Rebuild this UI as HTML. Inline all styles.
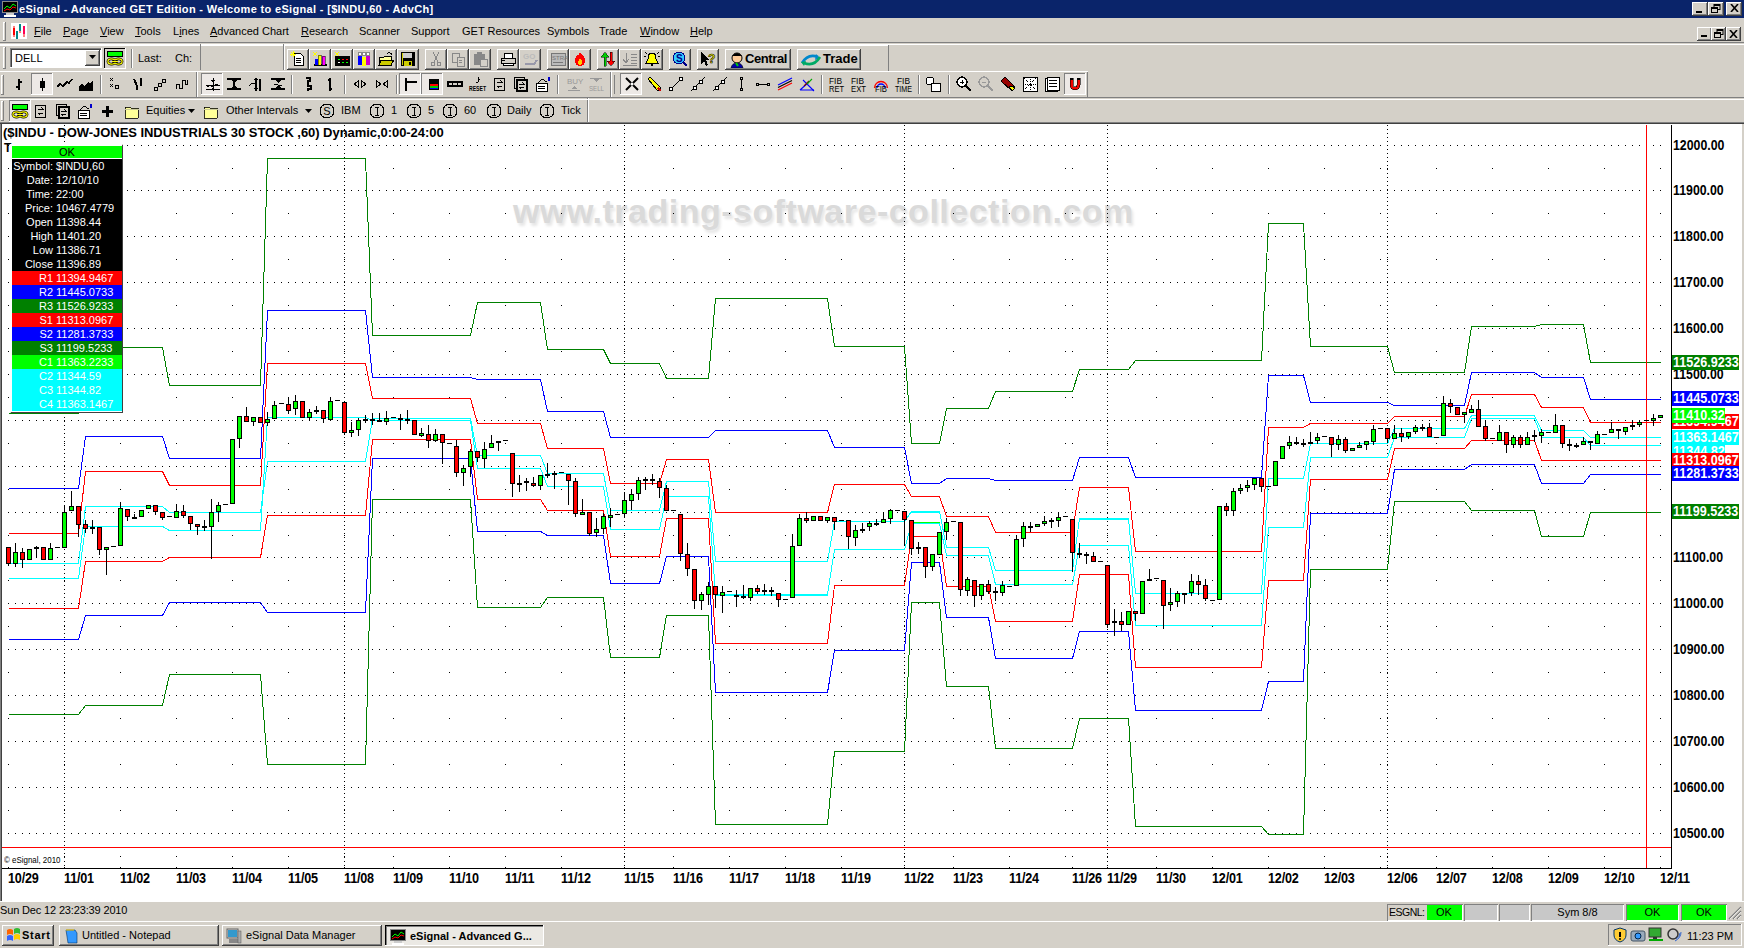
<!DOCTYPE html>
<html><head><meta charset="utf-8"><style>
html,body{margin:0;padding:0;width:1744px;height:948px;overflow:hidden;background:#d4d0c8}
body{position:relative;font-family:'Liberation Sans', sans-serif}
</style></head><body><div style="position:absolute;left:0px;top:0px;width:1744px;height:948px;background:#d4d0c8"></div><div style="position:absolute;left:0px;top:0px;width:1744px;height:18px;background:#0a246a"></div><svg style="position:absolute;left:2px;top:1px" width="16" height="16" viewBox="0 0 16 16"><rect x="0" y="0" width="16" height="12" fill="#888"/><rect x="1" y="1" width="14" height="10" fill="#000"/><path d="M2 8l3-3 3 2 3-4 3 2" stroke="#0f0" fill="none"/><path d="M2 10l3-2 3 1 3-3 3 1" stroke="#f00" fill="none"/><rect x="4" y="12" width="8" height="2" fill="#ccc"/><rect x="2" y="14" width="12" height="2" fill="#fff"/></svg><div style="position:absolute;left:19px;top:2px;white-space:nowrap;color:#fff;font:bold 11px 'Liberation Sans', sans-serif;line-height:14px;letter-spacing:0.33px">eSignal - Advanced GET Edition - Welcome to eSignal - [$INDU,60 - AdvCh]</div><div style="position:absolute;left:1692px;top:2px;width:16px;height:14px;background:#d4d0c8"></div><div style="position:absolute;left:1692px;top:2px;width:15px;height:1px;background:#fff"></div><div style="position:absolute;left:1692px;top:2px;width:1px;height:13px;background:#fff"></div><div style="position:absolute;left:1692px;top:15px;width:16px;height:1px;background:#404040"></div><div style="position:absolute;left:1707px;top:2px;width:1px;height:14px;background:#404040"></div><div style="position:absolute;left:1693px;top:14px;width:14px;height:1px;background:#808080"></div><div style="position:absolute;left:1706px;top:3px;width:1px;height:12px;background:#808080"></div><div style="position:absolute;left:1708px;top:2px;width:16px;height:14px;background:#d4d0c8"></div><div style="position:absolute;left:1708px;top:2px;width:15px;height:1px;background:#fff"></div><div style="position:absolute;left:1708px;top:2px;width:1px;height:13px;background:#fff"></div><div style="position:absolute;left:1708px;top:15px;width:16px;height:1px;background:#404040"></div><div style="position:absolute;left:1723px;top:2px;width:1px;height:14px;background:#404040"></div><div style="position:absolute;left:1709px;top:14px;width:14px;height:1px;background:#808080"></div><div style="position:absolute;left:1722px;top:3px;width:1px;height:12px;background:#808080"></div><div style="position:absolute;left:1726px;top:2px;width:16px;height:14px;background:#d4d0c8"></div><div style="position:absolute;left:1726px;top:2px;width:15px;height:1px;background:#fff"></div><div style="position:absolute;left:1726px;top:2px;width:1px;height:13px;background:#fff"></div><div style="position:absolute;left:1726px;top:15px;width:16px;height:1px;background:#404040"></div><div style="position:absolute;left:1741px;top:2px;width:1px;height:14px;background:#404040"></div><div style="position:absolute;left:1727px;top:14px;width:14px;height:1px;background:#808080"></div><div style="position:absolute;left:1740px;top:3px;width:1px;height:12px;background:#808080"></div><div style="position:absolute;left:1696px;top:11px;width:6px;height:2px;background:#000"></div><svg style="position:absolute;left:1711px;top:4px" width="10" height="9" viewBox="0 0 10 9"><rect x="3" y="0.5" width="6" height="5" fill="none" stroke="#000"/><rect x="3" y="0" width="6" height="2" fill="#000"/><rect x="0.5" y="3.5" width="6" height="5" fill="#d4d0c8" stroke="#000"/><rect x="0" y="3" width="7" height="2" fill="#000"/></svg><svg style="position:absolute;left:1730px;top:4px" width="9" height="8" viewBox="0 0 9 8"><path d="M1 0l7 8M8 0L1 8" stroke="#000" stroke-width="1.6"/></svg><div style="position:absolute;left:0px;top:18px;width:1744px;height:1px;background:#d4d0c8"></div><div style="position:absolute;left:3px;top:22px;width:1px;height:19px;background:#fff"></div><div style="position:absolute;left:3px;top:22px;width:3px;height:1px;background:#fff"></div><div style="position:absolute;left:5px;top:22px;width:1px;height:19px;background:#808080"></div><div style="position:absolute;left:3px;top:40px;width:3px;height:1px;background:#808080"></div><svg style="position:absolute;left:11px;top:23px" width="16" height="16" viewBox="0 0 16 16"><rect width="16" height="16" fill="#fff"/><path d="M3 3v11M9 1v9" stroke="#f00"/><rect x="2" y="5" width="2" height="7" fill="#f00"/><rect x="5" y="8" width="2" height="8" fill="#088"/><rect x="8" y="1" width="2" height="7" fill="#088"/><rect x="12" y="3" width="2" height="8" fill="#f0a"/><path d="M13 3v11" stroke="#f00"/></svg><div style="position:absolute;left:34px;top:25px;white-space:nowrap;color:#000;font:11px 'Liberation Sans', sans-serif;line-height:13px;text-decoration-thickness:1px;text-underline-offset:1px"><u>F</u>ile</div><div style="position:absolute;left:63px;top:25px;white-space:nowrap;color:#000;font:11px 'Liberation Sans', sans-serif;line-height:13px;text-decoration-thickness:1px;text-underline-offset:1px"><u>P</u>age</div><div style="position:absolute;left:100px;top:25px;white-space:nowrap;color:#000;font:11px 'Liberation Sans', sans-serif;line-height:13px;text-decoration-thickness:1px;text-underline-offset:1px"><u>V</u>iew</div><div style="position:absolute;left:135px;top:25px;white-space:nowrap;color:#000;font:11px 'Liberation Sans', sans-serif;line-height:13px;text-decoration-thickness:1px;text-underline-offset:1px"><u>T</u>ools</div><div style="position:absolute;left:173px;top:25px;white-space:nowrap;color:#000;font:11px 'Liberation Sans', sans-serif;line-height:13px;text-decoration-thickness:1px;text-underline-offset:1px">L<u>i</u>nes</div><div style="position:absolute;left:210px;top:25px;white-space:nowrap;color:#000;font:11px 'Liberation Sans', sans-serif;line-height:13px;text-decoration-thickness:1px;text-underline-offset:1px"><u>A</u>dvanced Chart</div><div style="position:absolute;left:301px;top:25px;white-space:nowrap;color:#000;font:11px 'Liberation Sans', sans-serif;line-height:13px;text-decoration-thickness:1px;text-underline-offset:1px"><u>R</u>esearch</div><div style="position:absolute;left:359px;top:25px;white-space:nowrap;color:#000;font:11px 'Liberation Sans', sans-serif;line-height:13px;text-decoration-thickness:1px;text-underline-offset:1px">Scanner</div><div style="position:absolute;left:411px;top:25px;white-space:nowrap;color:#000;font:11px 'Liberation Sans', sans-serif;line-height:13px;text-decoration-thickness:1px;text-underline-offset:1px">Support</div><div style="position:absolute;left:462px;top:25px;white-space:nowrap;color:#000;font:11px 'Liberation Sans', sans-serif;line-height:13px;text-decoration-thickness:1px;text-underline-offset:1px">GET Resources</div><div style="position:absolute;left:547px;top:25px;white-space:nowrap;color:#000;font:11px 'Liberation Sans', sans-serif;line-height:13px;text-decoration-thickness:1px;text-underline-offset:1px">Symbols</div><div style="position:absolute;left:599px;top:25px;white-space:nowrap;color:#000;font:11px 'Liberation Sans', sans-serif;line-height:13px;text-decoration-thickness:1px;text-underline-offset:1px">Trade</div><div style="position:absolute;left:640px;top:25px;white-space:nowrap;color:#000;font:11px 'Liberation Sans', sans-serif;line-height:13px;text-decoration-thickness:1px;text-underline-offset:1px"><u>W</u>indow</div><div style="position:absolute;left:690px;top:25px;white-space:nowrap;color:#000;font:11px 'Liberation Sans', sans-serif;line-height:13px;text-decoration-thickness:1px;text-underline-offset:1px"><u>H</u>elp</div><div style="position:absolute;left:1697px;top:27px;width:15px;height:14px;background:#d4d0c8"></div><div style="position:absolute;left:1697px;top:27px;width:14px;height:1px;background:#fff"></div><div style="position:absolute;left:1697px;top:27px;width:1px;height:13px;background:#fff"></div><div style="position:absolute;left:1697px;top:40px;width:15px;height:1px;background:#404040"></div><div style="position:absolute;left:1711px;top:27px;width:1px;height:14px;background:#404040"></div><div style="position:absolute;left:1698px;top:39px;width:13px;height:1px;background:#808080"></div><div style="position:absolute;left:1710px;top:28px;width:1px;height:12px;background:#808080"></div><div style="position:absolute;left:1711px;top:27px;width:15px;height:14px;background:#d4d0c8"></div><div style="position:absolute;left:1711px;top:27px;width:14px;height:1px;background:#fff"></div><div style="position:absolute;left:1711px;top:27px;width:1px;height:13px;background:#fff"></div><div style="position:absolute;left:1711px;top:40px;width:15px;height:1px;background:#404040"></div><div style="position:absolute;left:1725px;top:27px;width:1px;height:14px;background:#404040"></div><div style="position:absolute;left:1712px;top:39px;width:13px;height:1px;background:#808080"></div><div style="position:absolute;left:1724px;top:28px;width:1px;height:12px;background:#808080"></div><div style="position:absolute;left:1726px;top:27px;width:15px;height:14px;background:#d4d0c8"></div><div style="position:absolute;left:1726px;top:27px;width:14px;height:1px;background:#fff"></div><div style="position:absolute;left:1726px;top:27px;width:1px;height:13px;background:#fff"></div><div style="position:absolute;left:1726px;top:40px;width:15px;height:1px;background:#404040"></div><div style="position:absolute;left:1740px;top:27px;width:1px;height:14px;background:#404040"></div><div style="position:absolute;left:1727px;top:39px;width:13px;height:1px;background:#808080"></div><div style="position:absolute;left:1739px;top:28px;width:1px;height:12px;background:#808080"></div><div style="position:absolute;left:1701px;top:35px;width:6px;height:2px;background:#000"></div><svg style="position:absolute;left:1714px;top:29px" width="10" height="9" viewBox="0 0 10 9"><rect x="3" y="0.5" width="6" height="5" fill="none" stroke="#000"/><rect x="3" y="0" width="6" height="2" fill="#000"/><rect x="0.5" y="3.5" width="6" height="5" fill="#d4d0c8" stroke="#000"/><rect x="0" y="3" width="7" height="2" fill="#000"/></svg><svg style="position:absolute;left:1729px;top:30px" width="9" height="8" viewBox="0 0 9 8"><path d="M1 0l7 8M8 0L1 8" stroke="#000" stroke-width="1.6"/></svg><div style="position:absolute;left:0px;top:42px;width:1744px;height:1px;background:#808080"></div><div style="position:absolute;left:0px;top:44px;width:1744px;height:1px;background:#ffffff"></div><div style="position:absolute;left:0px;top:45px;width:888px;height:1px;background:#ffffff"></div><div style="position:absolute;left:3px;top:47px;width:1px;height:22px;background:#fff"></div><div style="position:absolute;left:3px;top:47px;width:3px;height:1px;background:#fff"></div><div style="position:absolute;left:5px;top:47px;width:1px;height:22px;background:#808080"></div><div style="position:absolute;left:3px;top:68px;width:3px;height:1px;background:#808080"></div><div style="position:absolute;left:10px;top:48px;width:92px;height:20px;background:#fff"></div><div style="position:absolute;left:10px;top:48px;width:92px;height:1px;background:#808080"></div><div style="position:absolute;left:10px;top:48px;width:1px;height:20px;background:#808080"></div><div style="position:absolute;left:11px;top:49px;width:90px;height:1px;background:#404040"></div><div style="position:absolute;left:11px;top:49px;width:1px;height:18px;background:#404040"></div><div style="position:absolute;left:10px;top:67px;width:92px;height:1px;background:#fff"></div><div style="position:absolute;left:101px;top:48px;width:1px;height:20px;background:#fff"></div><div style="position:absolute;left:15px;top:52px;white-space:nowrap;color:#000;font:11px 'Liberation Sans', sans-serif;line-height:13px">DELL</div><div style="position:absolute;left:85px;top:50px;width:15px;height:16px;background:#d4d0c8"></div><div style="position:absolute;left:85px;top:50px;width:14px;height:1px;background:#fff"></div><div style="position:absolute;left:85px;top:50px;width:1px;height:15px;background:#fff"></div><div style="position:absolute;left:85px;top:65px;width:15px;height:1px;background:#404040"></div><div style="position:absolute;left:99px;top:50px;width:1px;height:16px;background:#404040"></div><div style="position:absolute;left:86px;top:64px;width:13px;height:1px;background:#808080"></div><div style="position:absolute;left:98px;top:51px;width:1px;height:14px;background:#808080"></div><svg style="position:absolute;left:89px;top:55px" width="8" height="5" viewBox="0 0 8 5"><path d="M0 0h7l-3.5 4z" fill="#000"/></svg><div style="position:absolute;left:104px;top:48px;width:22px;height:21px;background:#d4d0c8"></div><div style="position:absolute;left:104px;top:48px;width:22px;height:1px;background:#808080"></div><div style="position:absolute;left:104px;top:48px;width:1px;height:21px;background:#808080"></div><div style="position:absolute;left:104px;top:68px;width:22px;height:1px;background:#fff"></div><div style="position:absolute;left:125px;top:48px;width:1px;height:21px;background:#fff"></div><div style="position:absolute;left:104px;top:48px;width:21px;height:1px;background:#000"></div><div style="position:absolute;left:104px;top:48px;width:1px;height:20px;background:#000"></div><svg style="position:absolute;left:107px;top:51px;overflow:visible" width="16" height="16" viewBox="0 0 16 16" shape-rendering="crispEdges"><rect x="0.5" y="0.5" width="15" height="5" fill="#0f0" stroke="#000"/><g shape-rendering="auto"><ellipse cx="4.5" cy="10.5" rx="3.6" ry="2.6" fill="none" stroke="#000" stroke-width="2.6"/><ellipse cx="11.5" cy="10.5" rx="3.6" ry="2.6" fill="none" stroke="#000" stroke-width="2.6"/><ellipse cx="4.5" cy="10.5" rx="3.6" ry="2.6" fill="none" stroke="#ff0" stroke-width="1.2"/><ellipse cx="11.5" cy="10.5" rx="3.6" ry="2.6" fill="none" stroke="#ff0" stroke-width="1.2"/><path d="M5 10.5h6" stroke="#000" stroke-width="2.4"/><path d="M5 10.5h6" stroke="#ff0" stroke-width="1"/></g></svg><div style="position:absolute;left:131px;top:49px;width:1px;height:19px;background:#808080"></div><div style="position:absolute;left:132px;top:49px;width:1px;height:19px;background:#fff"></div><div style="position:absolute;left:138px;top:52px;white-space:nowrap;color:#000;font:11px 'Liberation Sans', sans-serif;line-height:13px">Last:</div><div style="position:absolute;left:175px;top:52px;white-space:nowrap;color:#000;font:11px 'Liberation Sans', sans-serif;line-height:13px">Ch:</div><div style="position:absolute;left:200px;top:44px;width:1px;height:26px;background:#808080"></div><div style="position:absolute;left:283px;top:44px;width:1px;height:26px;background:#808080"></div><div style="position:absolute;left:284px;top:44px;width:1px;height:26px;background:#fff"></div><div style="position:absolute;left:287px;top:49px;width:22px;height:21px;background:#d4d0c8"></div><div style="position:absolute;left:287px;top:49px;width:21px;height:1px;background:#fff"></div><div style="position:absolute;left:287px;top:49px;width:1px;height:20px;background:#fff"></div><div style="position:absolute;left:287px;top:69px;width:22px;height:1px;background:#404040"></div><div style="position:absolute;left:308px;top:49px;width:1px;height:21px;background:#404040"></div><div style="position:absolute;left:288px;top:68px;width:20px;height:1px;background:#808080"></div><div style="position:absolute;left:307px;top:50px;width:1px;height:19px;background:#808080"></div><svg style="position:absolute;left:290px;top:51px;overflow:visible" width="16" height="16" viewBox="0 0 16 16" shape-rendering="crispEdges"><path d="M4 2h6l3 3v9H4z" fill="#fff" stroke="#000"/><path d="M6 7h5M6 9h5M6 11h5" stroke="#000"/><path d="M1 1l4 4M5 1L1 5M3 0v6M0 3h6" stroke="#ff0" stroke-width="1"/></svg><div style="position:absolute;left:309px;top:49px;width:22px;height:21px;background:#d4d0c8"></div><div style="position:absolute;left:309px;top:49px;width:21px;height:1px;background:#fff"></div><div style="position:absolute;left:309px;top:49px;width:1px;height:20px;background:#fff"></div><div style="position:absolute;left:309px;top:69px;width:22px;height:1px;background:#404040"></div><div style="position:absolute;left:330px;top:49px;width:1px;height:21px;background:#404040"></div><div style="position:absolute;left:310px;top:68px;width:20px;height:1px;background:#808080"></div><div style="position:absolute;left:329px;top:50px;width:1px;height:19px;background:#808080"></div><svg style="position:absolute;left:312px;top:51px;overflow:visible" width="16" height="16" viewBox="0 0 16 16" shape-rendering="crispEdges"><rect x="2" y="13" width="13" height="2" fill="#000"/><rect x="3" y="8" width="3" height="6" fill="#00f"/><rect x="6" y="4" width="3" height="10" fill="#ff0" stroke="#000" stroke-width=".5"/><rect x="10" y="5" width="3" height="9" fill="#f0f" stroke="#000" stroke-width=".5"/><path d="M1 1l4 4M5 1L1 5" stroke="#ff0"/></svg><div style="position:absolute;left:331px;top:49px;width:22px;height:21px;background:#d4d0c8"></div><div style="position:absolute;left:331px;top:49px;width:21px;height:1px;background:#fff"></div><div style="position:absolute;left:331px;top:49px;width:1px;height:20px;background:#fff"></div><div style="position:absolute;left:331px;top:69px;width:22px;height:1px;background:#404040"></div><div style="position:absolute;left:352px;top:49px;width:1px;height:21px;background:#404040"></div><div style="position:absolute;left:332px;top:68px;width:20px;height:1px;background:#808080"></div><div style="position:absolute;left:351px;top:50px;width:1px;height:19px;background:#808080"></div><svg style="position:absolute;left:334px;top:51px;overflow:visible" width="16" height="16" viewBox="0 0 16 16" shape-rendering="crispEdges"><rect x="1" y="5" width="15" height="10" fill="#000"/><rect x="4" y="8" width="2" height="1" fill="#0f0"/><rect x="8" y="8" width="2" height="1" fill="#f00"/><rect x="12" y="8" width="2" height="1" fill="#f00"/><rect x="4" y="11" width="2" height="1" fill="#fff"/><rect x="8" y="11" width="2" height="1" fill="#0f0"/><rect x="12" y="11" width="2" height="1" fill="#0f0"/><path d="M1 1l4 4M5 1L1 5" stroke="#ff0"/></svg><div style="position:absolute;left:353px;top:49px;width:22px;height:21px;background:#d4d0c8"></div><div style="position:absolute;left:353px;top:49px;width:21px;height:1px;background:#fff"></div><div style="position:absolute;left:353px;top:49px;width:1px;height:20px;background:#fff"></div><div style="position:absolute;left:353px;top:69px;width:22px;height:1px;background:#404040"></div><div style="position:absolute;left:374px;top:49px;width:1px;height:21px;background:#404040"></div><div style="position:absolute;left:354px;top:68px;width:20px;height:1px;background:#808080"></div><div style="position:absolute;left:373px;top:50px;width:1px;height:19px;background:#808080"></div><svg style="position:absolute;left:356px;top:51px;overflow:visible" width="16" height="16" viewBox="0 0 16 16" shape-rendering="crispEdges"><rect x="2" y="5" width="4" height="9" fill="#00f"/><rect x="6" y="6" width="4" height="9" fill="#ff0"/><rect x="10" y="5" width="4" height="9" fill="#c0c"/><circle cx="4" cy="3" r="2" fill="#fff" stroke="#888"/><circle cx="8" cy="3" r="2" fill="#fff" stroke="#888"/><circle cx="12" cy="3" r="2" fill="#fff" stroke="#888"/></svg><div style="position:absolute;left:375px;top:49px;width:22px;height:21px;background:#d4d0c8"></div><div style="position:absolute;left:375px;top:49px;width:21px;height:1px;background:#fff"></div><div style="position:absolute;left:375px;top:49px;width:1px;height:20px;background:#fff"></div><div style="position:absolute;left:375px;top:69px;width:22px;height:1px;background:#404040"></div><div style="position:absolute;left:396px;top:49px;width:1px;height:21px;background:#404040"></div><div style="position:absolute;left:376px;top:68px;width:20px;height:1px;background:#808080"></div><div style="position:absolute;left:395px;top:50px;width:1px;height:19px;background:#808080"></div><svg style="position:absolute;left:378px;top:51px;overflow:visible" width="16" height="16" viewBox="0 0 16 16" shape-rendering="crispEdges"><path d="M1 6h5l1-1h6v9H1z" fill="#ff9" stroke="#000"/><path d="M3 9h13l-3 5H1z" fill="#cc0" stroke="#000"/><path d="M9 3q3-3 5 1" stroke="#000" fill="none"/></svg><div style="position:absolute;left:397px;top:49px;width:22px;height:21px;background:#d4d0c8"></div><div style="position:absolute;left:397px;top:49px;width:21px;height:1px;background:#fff"></div><div style="position:absolute;left:397px;top:49px;width:1px;height:20px;background:#fff"></div><div style="position:absolute;left:397px;top:69px;width:22px;height:1px;background:#404040"></div><div style="position:absolute;left:418px;top:49px;width:1px;height:21px;background:#404040"></div><div style="position:absolute;left:398px;top:68px;width:20px;height:1px;background:#808080"></div><div style="position:absolute;left:417px;top:50px;width:1px;height:19px;background:#808080"></div><svg style="position:absolute;left:400px;top:51px;overflow:visible" width="16" height="16" viewBox="0 0 16 16" shape-rendering="crispEdges"><rect x="1" y="1" width="14" height="14" fill="#000"/><rect x="3" y="2" width="9" height="5" fill="#ccc"/><rect x="2" y="2" width="1" height="12" fill="#cc0"/><rect x="4" y="10" width="8" height="5" fill="#cc0"/><rect x="9" y="11" width="2" height="3" fill="#000"/></svg><div style="position:absolute;left:425px;top:49px;width:22px;height:21px;background:#d4d0c8"></div><div style="position:absolute;left:425px;top:49px;width:21px;height:1px;background:#fff"></div><div style="position:absolute;left:425px;top:49px;width:1px;height:20px;background:#fff"></div><div style="position:absolute;left:425px;top:69px;width:22px;height:1px;background:#404040"></div><div style="position:absolute;left:446px;top:49px;width:1px;height:21px;background:#404040"></div><div style="position:absolute;left:426px;top:68px;width:20px;height:1px;background:#808080"></div><div style="position:absolute;left:445px;top:50px;width:1px;height:19px;background:#808080"></div><svg style="position:absolute;left:428px;top:51px;overflow:visible" width="16" height="16" viewBox="0 0 16 16" shape-rendering="crispEdges"><path d="M5 1l5 10M11 1L6 11" stroke="#888"/><circle cx="5" cy="13" r="2" fill="none" stroke="#888"/><circle cx="11" cy="13" r="2" fill="none" stroke="#888"/></svg><div style="position:absolute;left:447px;top:49px;width:22px;height:21px;background:#d4d0c8"></div><div style="position:absolute;left:447px;top:49px;width:21px;height:1px;background:#fff"></div><div style="position:absolute;left:447px;top:49px;width:1px;height:20px;background:#fff"></div><div style="position:absolute;left:447px;top:69px;width:22px;height:1px;background:#404040"></div><div style="position:absolute;left:468px;top:49px;width:1px;height:21px;background:#404040"></div><div style="position:absolute;left:448px;top:68px;width:20px;height:1px;background:#808080"></div><div style="position:absolute;left:467px;top:50px;width:1px;height:19px;background:#808080"></div><svg style="position:absolute;left:450px;top:51px;overflow:visible" width="16" height="16" viewBox="0 0 16 16" shape-rendering="crispEdges"><rect x="2" y="2" width="7" height="9" fill="none" stroke="#888"/><rect x="7" y="6" width="7" height="9" fill="#d4d0c8" stroke="#888"/><path d="M9 9h3M9 11h3" stroke="#888"/></svg><div style="position:absolute;left:469px;top:49px;width:22px;height:21px;background:#d4d0c8"></div><div style="position:absolute;left:469px;top:49px;width:21px;height:1px;background:#fff"></div><div style="position:absolute;left:469px;top:49px;width:1px;height:20px;background:#fff"></div><div style="position:absolute;left:469px;top:69px;width:22px;height:1px;background:#404040"></div><div style="position:absolute;left:490px;top:49px;width:1px;height:21px;background:#404040"></div><div style="position:absolute;left:470px;top:68px;width:20px;height:1px;background:#808080"></div><div style="position:absolute;left:489px;top:50px;width:1px;height:19px;background:#808080"></div><svg style="position:absolute;left:472px;top:51px;overflow:visible" width="16" height="16" viewBox="0 0 16 16" shape-rendering="crispEdges"><rect x="2" y="3" width="11" height="11" rx="1" fill="#888"/><rect x="5" y="1" width="5" height="3" fill="#888"/><rect x="8" y="8" width="7" height="7" fill="#d4d0c8" stroke="#888"/></svg><div style="position:absolute;left:497px;top:49px;width:22px;height:21px;background:#d4d0c8"></div><div style="position:absolute;left:497px;top:49px;width:21px;height:1px;background:#fff"></div><div style="position:absolute;left:497px;top:49px;width:1px;height:20px;background:#fff"></div><div style="position:absolute;left:497px;top:69px;width:22px;height:1px;background:#404040"></div><div style="position:absolute;left:518px;top:49px;width:1px;height:21px;background:#404040"></div><div style="position:absolute;left:498px;top:68px;width:20px;height:1px;background:#808080"></div><div style="position:absolute;left:517px;top:50px;width:1px;height:19px;background:#808080"></div><svg style="position:absolute;left:500px;top:51px;overflow:visible" width="16" height="16" viewBox="0 0 16 16" shape-rendering="crispEdges"><path d="M4 2h8v5H4z" fill="#fff" stroke="#000"/><path d="M1 7h14v5H1z" fill="#d4d0c8" stroke="#000"/><path d="M3 12h10v2H3z" fill="#fff" stroke="#000"/><path d="M2 9h3" stroke="#000"/></svg><div style="position:absolute;left:519px;top:49px;width:22px;height:21px;background:#d4d0c8"></div><div style="position:absolute;left:519px;top:49px;width:21px;height:1px;background:#fff"></div><div style="position:absolute;left:519px;top:49px;width:1px;height:20px;background:#fff"></div><div style="position:absolute;left:519px;top:69px;width:22px;height:1px;background:#404040"></div><div style="position:absolute;left:540px;top:49px;width:1px;height:21px;background:#404040"></div><div style="position:absolute;left:520px;top:68px;width:20px;height:1px;background:#808080"></div><div style="position:absolute;left:539px;top:50px;width:1px;height:19px;background:#808080"></div><svg style="position:absolute;left:522px;top:51px;overflow:visible" width="16" height="16" viewBox="0 0 16 16" shape-rendering="crispEdges"><text x="1" y="8" font-family="Liberation Sans" font-weight="bold" font-size="8" fill="#bbb">GO</text><path d="M3 13h9l3-4" stroke="#99a" stroke-width="2" fill="none"/></svg><div style="position:absolute;left:547px;top:49px;width:22px;height:21px;background:#d4d0c8"></div><div style="position:absolute;left:547px;top:49px;width:21px;height:1px;background:#fff"></div><div style="position:absolute;left:547px;top:49px;width:1px;height:20px;background:#fff"></div><div style="position:absolute;left:547px;top:69px;width:22px;height:1px;background:#404040"></div><div style="position:absolute;left:568px;top:49px;width:1px;height:21px;background:#404040"></div><div style="position:absolute;left:548px;top:68px;width:20px;height:1px;background:#808080"></div><div style="position:absolute;left:567px;top:50px;width:1px;height:19px;background:#808080"></div><svg style="position:absolute;left:550px;top:51px;overflow:visible" width="16" height="16" viewBox="0 0 16 16" shape-rendering="crispEdges"><rect x="1" y="2" width="14" height="12" fill="#bbb" stroke="#777"/><text x="2" y="9" font-family="Liberation Sans" font-size="6" fill="#777">STRA</text><path d="M3 11h10" stroke="#777"/></svg><div style="position:absolute;left:569px;top:49px;width:22px;height:21px;background:#d4d0c8"></div><div style="position:absolute;left:569px;top:49px;width:21px;height:1px;background:#fff"></div><div style="position:absolute;left:569px;top:49px;width:1px;height:20px;background:#fff"></div><div style="position:absolute;left:569px;top:69px;width:22px;height:1px;background:#404040"></div><div style="position:absolute;left:590px;top:49px;width:1px;height:21px;background:#404040"></div><div style="position:absolute;left:570px;top:68px;width:20px;height:1px;background:#808080"></div><div style="position:absolute;left:589px;top:50px;width:1px;height:19px;background:#808080"></div><svg style="position:absolute;left:572px;top:51px;overflow:visible" width="16" height="16" viewBox="0 0 16 16" shape-rendering="crispEdges"><path d="M8 1c2 3 6 5 5 10q-1 4-5 4t-5-4c-1-4 2-5 2-8 1 2 2 2 3-2z" fill="#f00"/><path d="M8 7q3 3 2 6-2 2-4 0 0-3 2-6z" fill="#fc0"/></svg><div style="position:absolute;left:597px;top:49px;width:22px;height:21px;background:#d4d0c8"></div><div style="position:absolute;left:597px;top:49px;width:21px;height:1px;background:#fff"></div><div style="position:absolute;left:597px;top:49px;width:1px;height:20px;background:#fff"></div><div style="position:absolute;left:597px;top:69px;width:22px;height:1px;background:#404040"></div><div style="position:absolute;left:618px;top:49px;width:1px;height:21px;background:#404040"></div><div style="position:absolute;left:598px;top:68px;width:20px;height:1px;background:#808080"></div><div style="position:absolute;left:617px;top:50px;width:1px;height:19px;background:#808080"></div><svg style="position:absolute;left:600px;top:51px;overflow:visible" width="16" height="16" viewBox="0 0 16 16" shape-rendering="crispEdges"><path d="M5 1l4 5H6v9H4V6H1z" fill="#0c0" stroke="#000" stroke-width=".5"/><path d="M11 15l4-5h-3V1h-2v9H7z" fill="#f00" stroke="#000" stroke-width=".5"/></svg><div style="position:absolute;left:619px;top:49px;width:22px;height:21px;background:#d4d0c8"></div><div style="position:absolute;left:619px;top:49px;width:21px;height:1px;background:#fff"></div><div style="position:absolute;left:619px;top:49px;width:1px;height:20px;background:#fff"></div><div style="position:absolute;left:619px;top:69px;width:22px;height:1px;background:#404040"></div><div style="position:absolute;left:640px;top:49px;width:1px;height:21px;background:#404040"></div><div style="position:absolute;left:620px;top:68px;width:20px;height:1px;background:#808080"></div><div style="position:absolute;left:639px;top:50px;width:1px;height:19px;background:#808080"></div><svg style="position:absolute;left:622px;top:51px;overflow:visible" width="16" height="16" viewBox="0 0 16 16" shape-rendering="crispEdges"><path d="M4 2v9M1 8l3 4 3-4" stroke="#888" fill="none"/><path d="M9 3h6M9 6h6M9 9h6M9 12h6M1 14h14" stroke="#888"/></svg><div style="position:absolute;left:641px;top:49px;width:22px;height:21px;background:#d4d0c8"></div><div style="position:absolute;left:641px;top:49px;width:21px;height:1px;background:#fff"></div><div style="position:absolute;left:641px;top:49px;width:1px;height:20px;background:#fff"></div><div style="position:absolute;left:641px;top:69px;width:22px;height:1px;background:#404040"></div><div style="position:absolute;left:662px;top:49px;width:1px;height:21px;background:#404040"></div><div style="position:absolute;left:642px;top:68px;width:20px;height:1px;background:#808080"></div><div style="position:absolute;left:661px;top:50px;width:1px;height:19px;background:#808080"></div><svg style="position:absolute;left:644px;top:51px;overflow:visible" width="16" height="16" viewBox="0 0 16 16" shape-rendering="crispEdges"><path d="M8 2q4 0 4 6l2 4H2l2-4q0-6 4-6z" fill="#ff0" stroke="#000"/><circle cx="8" cy="14" r="1.5" fill="#000"/><path d="M0 5l2 1M16 5l-2 1M1 1l2 2M15 1l-2 2" stroke="#000"/></svg><div style="position:absolute;left:669px;top:49px;width:22px;height:21px;background:#d4d0c8"></div><div style="position:absolute;left:669px;top:49px;width:21px;height:1px;background:#fff"></div><div style="position:absolute;left:669px;top:49px;width:1px;height:20px;background:#fff"></div><div style="position:absolute;left:669px;top:69px;width:22px;height:1px;background:#404040"></div><div style="position:absolute;left:690px;top:49px;width:1px;height:21px;background:#404040"></div><div style="position:absolute;left:670px;top:68px;width:20px;height:1px;background:#808080"></div><div style="position:absolute;left:689px;top:50px;width:1px;height:19px;background:#808080"></div><svg style="position:absolute;left:672px;top:51px;overflow:visible" width="16" height="16" viewBox="0 0 16 16" shape-rendering="crispEdges"><circle cx="7" cy="7" r="6" fill="#3cf" stroke="#008"/><text x="4" y="11" font-family="Liberation Sans" font-weight="bold" font-size="10" fill="#008">S</text><path d="M11 11l4 4" stroke="#008" stroke-width="2"/></svg><div style="position:absolute;left:697px;top:49px;width:22px;height:21px;background:#d4d0c8"></div><div style="position:absolute;left:697px;top:49px;width:21px;height:1px;background:#fff"></div><div style="position:absolute;left:697px;top:49px;width:1px;height:20px;background:#fff"></div><div style="position:absolute;left:697px;top:69px;width:22px;height:1px;background:#404040"></div><div style="position:absolute;left:718px;top:49px;width:1px;height:21px;background:#404040"></div><div style="position:absolute;left:698px;top:68px;width:20px;height:1px;background:#808080"></div><div style="position:absolute;left:717px;top:50px;width:1px;height:19px;background:#808080"></div><svg style="position:absolute;left:700px;top:51px;overflow:visible" width="16" height="16" viewBox="0 0 16 16" shape-rendering="crispEdges"><path d="M1 1v12l3-3 2 5 2-1-2-5h4z" fill="#000"/><text x="8" y="12" font-family="Liberation Sans" font-weight="bold" font-size="12" fill="#ff0" stroke="#000" stroke-width=".6">?</text></svg><div style="position:absolute;left:725px;top:49px;width:66px;height:21px;background:#d4d0c8"></div><div style="position:absolute;left:725px;top:49px;width:65px;height:1px;background:#fff"></div><div style="position:absolute;left:725px;top:49px;width:1px;height:20px;background:#fff"></div><div style="position:absolute;left:725px;top:69px;width:66px;height:1px;background:#404040"></div><div style="position:absolute;left:790px;top:49px;width:1px;height:21px;background:#404040"></div><div style="position:absolute;left:726px;top:68px;width:64px;height:1px;background:#808080"></div><div style="position:absolute;left:789px;top:50px;width:1px;height:19px;background:#808080"></div><svg style="position:absolute;left:728px;top:51px" width="18" height="17" viewBox="0 0 18 17"><circle cx="9" cy="7" r="5" fill="#fc9" stroke="#000"/><path d="M4 5q5-6 10 0" fill="#000"/><path d="M3 17q1-5 6-5t6 5z" fill="#00a" stroke="#000" stroke-width=".6"/><path d="M8 12l2 3" stroke="#0c0" stroke-width="2"/></svg><div style="position:absolute;left:745px;top:51px;white-space:nowrap;color:#000;font:bold 13px 'Liberation Sans', sans-serif;line-height:16px;letter-spacing:-0.4px">Central</div><div style="position:absolute;left:797px;top:49px;width:64px;height:21px;background:#d4d0c8"></div><div style="position:absolute;left:797px;top:49px;width:63px;height:1px;background:#fff"></div><div style="position:absolute;left:797px;top:49px;width:1px;height:20px;background:#fff"></div><div style="position:absolute;left:797px;top:69px;width:64px;height:1px;background:#404040"></div><div style="position:absolute;left:860px;top:49px;width:1px;height:21px;background:#404040"></div><div style="position:absolute;left:798px;top:68px;width:62px;height:1px;background:#808080"></div><div style="position:absolute;left:859px;top:50px;width:1px;height:19px;background:#808080"></div><svg style="position:absolute;left:800px;top:52px" width="22" height="15" viewBox="0 0 22 15"><path d="M2 11q6-10 16-6" stroke="#08c" stroke-width="2.5" fill="none"/><path d="M16 2l4 4-5 2z" fill="#08c"/><path d="M20 5q-6 10-16 6" stroke="#0a6" stroke-width="2.5" fill="none"/><path d="M1 10l5-1-2 5z" fill="#0a6"/></svg><div style="position:absolute;left:823px;top:51px;white-space:nowrap;color:#000;font:bold 13px 'Liberation Sans', sans-serif;line-height:16px">Trade</div><div style="position:absolute;left:888px;top:45px;width:1px;height:26px;background:#808080"></div><div style="position:absolute;left:0px;top:71px;width:1088px;height:1px;background:#fff"></div><div style="position:absolute;left:1087px;top:72px;width:1px;height:25px;background:#808080"></div><div style="position:absolute;left:1px;top:75px;width:1px;height:20px;background:#fff"></div><div style="position:absolute;left:1px;top:75px;width:3px;height:1px;background:#fff"></div><div style="position:absolute;left:3px;top:75px;width:1px;height:20px;background:#808080"></div><div style="position:absolute;left:1px;top:94px;width:3px;height:1px;background:#808080"></div><div style="position:absolute;left:31px;top:73px;width:22px;height:22px;background:#ede9e6"></div><div style="position:absolute;left:31px;top:73px;width:22px;height:1px;background:#808080"></div><div style="position:absolute;left:31px;top:73px;width:1px;height:22px;background:#808080"></div><div style="position:absolute;left:31px;top:94px;width:22px;height:1px;background:#fff"></div><div style="position:absolute;left:52px;top:73px;width:1px;height:22px;background:#fff"></div><div style="position:absolute;left:201px;top:73px;width:22px;height:22px;background:#ede9e6"></div><div style="position:absolute;left:201px;top:73px;width:22px;height:1px;background:#808080"></div><div style="position:absolute;left:201px;top:73px;width:1px;height:22px;background:#808080"></div><div style="position:absolute;left:201px;top:94px;width:22px;height:1px;background:#fff"></div><div style="position:absolute;left:222px;top:73px;width:1px;height:22px;background:#fff"></div><div style="position:absolute;left:399px;top:73px;width:22px;height:22px;background:#ede9e6"></div><div style="position:absolute;left:399px;top:73px;width:22px;height:1px;background:#808080"></div><div style="position:absolute;left:399px;top:73px;width:1px;height:22px;background:#808080"></div><div style="position:absolute;left:399px;top:94px;width:22px;height:1px;background:#fff"></div><div style="position:absolute;left:420px;top:73px;width:1px;height:22px;background:#fff"></div><div style="position:absolute;left:421px;top:73px;width:22px;height:22px;background:#ede9e6"></div><div style="position:absolute;left:421px;top:73px;width:22px;height:1px;background:#808080"></div><div style="position:absolute;left:421px;top:73px;width:1px;height:22px;background:#808080"></div><div style="position:absolute;left:421px;top:94px;width:22px;height:1px;background:#fff"></div><div style="position:absolute;left:442px;top:73px;width:1px;height:22px;background:#fff"></div><div style="position:absolute;left:620px;top:73px;width:22px;height:22px;background:#ede9e6"></div><div style="position:absolute;left:620px;top:73px;width:22px;height:1px;background:#808080"></div><div style="position:absolute;left:620px;top:73px;width:1px;height:22px;background:#808080"></div><div style="position:absolute;left:620px;top:94px;width:22px;height:1px;background:#fff"></div><div style="position:absolute;left:641px;top:73px;width:1px;height:22px;background:#fff"></div><div style="position:absolute;left:1064px;top:73px;width:22px;height:22px;background:#ede9e6"></div><div style="position:absolute;left:1064px;top:73px;width:22px;height:1px;background:#808080"></div><div style="position:absolute;left:1064px;top:73px;width:1px;height:22px;background:#808080"></div><div style="position:absolute;left:1064px;top:94px;width:22px;height:1px;background:#fff"></div><div style="position:absolute;left:1085px;top:73px;width:1px;height:22px;background:#fff"></div><svg style="position:absolute;left:11px;top:76px;overflow:visible" width="16" height="16" viewBox="0 0 16 16" shape-rendering="crispEdges"><path d="M8 3v11M8 6h3M5 11h3" stroke="#000" stroke-width="2"/></svg><svg style="position:absolute;left:34px;top:76px;overflow:visible" width="16" height="16" viewBox="0 0 16 16" shape-rendering="crispEdges"><path d="M8 2v13" stroke="#000"/><rect x="6" y="5" width="5" height="7" fill="#000"/></svg><svg style="position:absolute;left:56px;top:76px;overflow:visible" width="16" height="16" viewBox="0 0 16 16" shape-rendering="crispEdges"><path d="M1 11l3-3 3 2 4-4 2 1 3-4" stroke="#000" stroke-width="1.5" fill="none"/></svg><svg style="position:absolute;left:78px;top:76px;overflow:visible" width="16" height="16" viewBox="0 0 16 16" shape-rendering="crispEdges"><path d="M1 15V10l3-2 3 2 3-4 2 1 3-3v11z" fill="#000"/></svg><svg style="position:absolute;left:107px;top:76px;overflow:visible" width="16" height="16" viewBox="0 0 16 16" shape-rendering="crispEdges"><path d="M3 2l3 3M6 2L3 5M3 8l3 3M6 8l-3 3" stroke="#000"/><circle cx="10" cy="11" r="2" fill="none" stroke="#000"/></svg><svg style="position:absolute;left:130px;top:76px;overflow:visible" width="16" height="16" viewBox="0 0 16 16" shape-rendering="crispEdges"><path d="M4 3l3 7v4M11 2v8" stroke="#000" stroke-width="2" fill="none"/></svg><svg style="position:absolute;left:152px;top:76px;overflow:visible" width="16" height="16" viewBox="0 0 16 16" shape-rendering="crispEdges"><rect x="2" y="11" width="3" height="3" fill="none" stroke="#000"/><rect x="6" y="7" width="3" height="3" fill="none" stroke="#000"/><rect x="10" y="3" width="3" height="3" fill="none" stroke="#000"/></svg><svg style="position:absolute;left:174px;top:76px;overflow:visible" width="16" height="16" viewBox="0 0 16 16" shape-rendering="crispEdges"><path d="M2.5 12.5v-4h3v4h3v-8h3v4h2v-5" stroke="#000" fill="none"/></svg><svg style="position:absolute;left:205px;top:76px;overflow:visible" width="16" height="16" viewBox="0 0 16 16" shape-rendering="crispEdges"><path d="M1 9h14M1 13h14M8 2v13" stroke="#000"/><path d="M6 4h4l-2 3zM6 14h4l-2-3z" fill="#000"/><path d="M2 11l3-2 3 2 3-3 3 2" stroke="#000" fill="none"/></svg><svg style="position:absolute;left:226px;top:76px;overflow:visible" width="16" height="16" viewBox="0 0 16 16" shape-rendering="crispEdges"><path d="M1 3h14M1 13h14M8 3v10" stroke="#000" stroke-width="1.5"/><path d="M5 4h6l-3 3zM5 12h6l-3-3z" fill="#000"/></svg><svg style="position:absolute;left:248px;top:76px;overflow:visible" width="16" height="16" viewBox="0 0 16 16" shape-rendering="crispEdges"><path d="M1 10l3-3 2 1 3-3" stroke="#000" fill="none"/><path d="M8 2v13M12 3v12" stroke="#000" stroke-width="1.5"/><path d="M6 4h4l-2-3zM6 12h4l-2 3z" fill="#000"/></svg><svg style="position:absolute;left:270px;top:76px;overflow:visible" width="16" height="16" viewBox="0 0 16 16" shape-rendering="crispEdges"><path d="M1 3h14M1 13h14" stroke="#000" stroke-width="1.5"/><path d="M5 4h6l-3 3zM5 12h6l-3-3z" fill="#000"/><path d="M4 8l8 2" stroke="#000"/></svg><svg style="position:absolute;left:300px;top:76px;overflow:visible" width="16" height="16" viewBox="0 0 16 16" shape-rendering="crispEdges"><path d="M6 2h4v3H8v5h3v3H8v2" stroke="#000" stroke-width="1.5" fill="none"/></svg><svg style="position:absolute;left:322px;top:76px;overflow:visible" width="16" height="16" viewBox="0 0 16 16" shape-rendering="crispEdges"><path d="M8 2v13M6 4h2M8 13h2" stroke="#000" stroke-width="1.5"/></svg><svg style="position:absolute;left:352px;top:76px;overflow:visible" width="16" height="16" viewBox="0 0 16 16" shape-rendering="crispEdges"><path d="M6.5 4.5L2.5 8l4 3.5zM9.5 4.5l4 3.5-4 3.5z" fill="none" stroke="#000"/></svg><svg style="position:absolute;left:374px;top:76px;overflow:visible" width="16" height="16" viewBox="0 0 16 16" shape-rendering="crispEdges"><path d="M2.5 4.5l4 3.5-4 3.5zM13.5 4.5L9.5 8l4 3.5z" fill="none" stroke="#000"/></svg><svg style="position:absolute;left:402px;top:76px;overflow:visible" width="16" height="16" viewBox="0 0 16 16" shape-rendering="crispEdges"><path d="M4 2v13M4 6h11" stroke="#000" stroke-width="1.5"/></svg><svg style="position:absolute;left:425px;top:76px;overflow:visible" width="16" height="16" viewBox="0 0 16 16" shape-rendering="crispEdges"><rect x="4" y="3" width="10" height="11" fill="#000"/><rect x="5" y="8" width="8" height="2" fill="#f00"/><rect x="5" y="10" width="8" height="2" fill="#0c0"/><rect x="5" y="12" width="8" height="1" fill="#00f"/></svg><svg style="position:absolute;left:447px;top:76px;overflow:visible" width="16" height="16" viewBox="0 0 16 16" shape-rendering="crispEdges"><rect x="1" y="6" width="14" height="4" fill="none" stroke="#000" stroke-width="1.5"/><path d="M5.5 6v4M10.5 6v4" stroke="#000"/></svg><svg style="position:absolute;left:469px;top:76px;overflow:visible" width="16" height="16" viewBox="0 0 16 16" shape-rendering="crispEdges"><path d="M9 1v5M9 3h2M7 6h2" stroke="#000"/><text x="0" y="15" font-family="Liberation Sans" font-weight="bold" font-size="7" textLength="17" lengthAdjust="spacingAndGlyphs" fill="#000">RESET</text></svg><svg style="position:absolute;left:492px;top:76px;overflow:visible" width="16" height="16" viewBox="0 0 16 16" shape-rendering="crispEdges"><rect x="2.5" y="2.5" width="10" height="12" fill="none" stroke="#000"/><path d="M5 6h5l-2-2M10 10H5l2 2" stroke="#000" fill="none"/></svg><svg style="position:absolute;left:513px;top:76px;overflow:visible" width="16" height="16" viewBox="0 0 16 16" shape-rendering="crispEdges"><rect x="1" y="1" width="10" height="11" fill="none" stroke="#000"/><rect x="4" y="4" width="10" height="11" fill="#d4d0c8" stroke="#000" stroke-width="1.5"/><path d="M6 8h5l-2-2M11 11H6l2 2" stroke="#000" fill="none"/></svg><svg style="position:absolute;left:535px;top:76px;overflow:visible" width="16" height="16" viewBox="0 0 16 16" shape-rendering="crispEdges"><rect x="1" y="7" width="11" height="8" fill="#fff" stroke="#000"/><path d="M3 10h7M3 12h7" stroke="#000"/><path d="M3 7l4-4 5 3" stroke="#000" fill="none"/><rect x="13" y="1" width="2" height="4" fill="#00c"/></svg><svg style="position:absolute;left:566px;top:76px;overflow:visible" width="16" height="16" viewBox="0 0 16 16" shape-rendering="crispEdges"><text x="1" y="8" font-family="Liberation Sans" font-size="8" fill="#999">BUY</text><path d="M8 10l-3 3h6z" fill="#999"/><path d="M2 14h12" stroke="#999"/></svg><svg style="position:absolute;left:588px;top:76px;overflow:visible" width="16" height="16" viewBox="0 0 16 16" shape-rendering="crispEdges"><path d="M2 2h12" stroke="#999"/><path d="M8 6l-3-3h6z" fill="#999"/><text x="1" y="15" font-family="Liberation Sans" font-size="8" textLength="15" lengthAdjust="spacingAndGlyphs" fill="#999">SELL</text></svg><svg style="position:absolute;left:624px;top:76px;overflow:visible" width="16" height="16" viewBox="0 0 16 16" shape-rendering="crispEdges"><g shape-rendering="auto"><path d="M2 2l12 12M14 2L2 14" stroke="#000" stroke-width="2"/><circle cx="8" cy="8" r="1.5" fill="#fff"/></g></svg><svg style="position:absolute;left:646px;top:76px;overflow:visible" width="16" height="16" viewBox="0 0 16 16" shape-rendering="crispEdges"><path d="M2 3l2-2 11 11-1 3-3-1z" fill="#ff0" stroke="#000"/><path d="M12 12l3 3" stroke="#c00" stroke-width="2"/></svg><svg style="position:absolute;left:668px;top:76px;overflow:visible" width="16" height="16" viewBox="0 0 16 16" shape-rendering="crispEdges"><path d="M4 12L12 4" stroke="#000" shape-rendering="auto"/><rect x="1.5" y="11.5" width="3" height="3" fill="#fff" stroke="#000"/><rect x="11.5" y="1.5" width="3" height="3" fill="#fff" stroke="#000"/></svg><svg style="position:absolute;left:690px;top:76px;overflow:visible" width="16" height="16" viewBox="0 0 16 16" shape-rendering="crispEdges"><path d="M1 15L15 1" stroke="#000" shape-rendering="auto"/><rect x="3.5" y="10.5" width="3" height="3" fill="#fff" stroke="#000"/><rect x="9.5" y="4.5" width="3" height="3" fill="#fff" stroke="#000"/></svg><svg style="position:absolute;left:712px;top:76px;overflow:visible" width="16" height="16" viewBox="0 0 16 16" shape-rendering="crispEdges"><path d="M1 15L15 1" stroke="#000" shape-rendering="auto"/><rect x="3.5" y="10.5" width="3" height="3" fill="#fff" stroke="#000"/><rect x="9.5" y="4.5" width="3" height="3" fill="#fff" stroke="#000"/></svg><svg style="position:absolute;left:733px;top:76px;overflow:visible" width="16" height="16" viewBox="0 0 16 16" shape-rendering="crispEdges"><path d="M8.5 4v8" stroke="#000"/><rect x="7.5" y="1.5" width="2" height="2" fill="none" stroke="#000"/><rect x="7.5" y="12.5" width="2" height="2" fill="none" stroke="#000"/></svg><svg style="position:absolute;left:755px;top:76px;overflow:visible" width="16" height="16" viewBox="0 0 16 16" shape-rendering="crispEdges"><path d="M4 8.5h8" stroke="#000"/><rect x="1.5" y="7.5" width="2" height="2" fill="none" stroke="#000"/><rect x="12.5" y="7.5" width="2" height="2" fill="none" stroke="#000"/></svg><svg style="position:absolute;left:777px;top:76px;overflow:visible" width="16" height="16" viewBox="0 0 16 16" shape-rendering="crispEdges"><g shape-rendering="auto"><path d="M1 9L15 2" stroke="#00f" stroke-width="1.2"/><path d="M1 11.5L15 4.5" stroke="#000" stroke-width="1.2"/><path d="M1 14L15 7" stroke="#f00" stroke-width="1.2"/></g></svg><svg style="position:absolute;left:799px;top:76px;overflow:visible" width="16" height="16" viewBox="0 0 16 16" shape-rendering="crispEdges"><g shape-rendering="auto"><path d="M1 14L10 6M1 14L15 14" stroke="#00f" stroke-width="1.1"/><path d="M4 4l11 11" stroke="#00f" stroke-width="1.1"/><path d="M5 10l5-5" stroke="#800" stroke-width="1.1"/><path d="M8 8l5-5" stroke="#0a0" stroke-width="1.1"/></g></svg><svg style="position:absolute;left:829px;top:76px;overflow:visible" width="16" height="16" viewBox="0 0 16 16" shape-rendering="crispEdges"><text x="0" y="7.5" font-family="Liberation Sans" font-size="9" textLength="13" lengthAdjust="spacingAndGlyphs" fill="#000">FIB</text><text x="0" y="15.5" font-family="Liberation Sans" font-size="9" textLength="15" lengthAdjust="spacingAndGlyphs" fill="#000">RET</text></svg><svg style="position:absolute;left:851px;top:76px;overflow:visible" width="16" height="16" viewBox="0 0 16 16" shape-rendering="crispEdges"><text x="0" y="7.5" font-family="Liberation Sans" font-size="9" textLength="13" lengthAdjust="spacingAndGlyphs" fill="#000">FIB</text><text x="0" y="15.5" font-family="Liberation Sans" font-size="9" textLength="15" lengthAdjust="spacingAndGlyphs" fill="#000">EXT</text></svg><svg style="position:absolute;left:873px;top:76px;overflow:visible" width="16" height="16" viewBox="0 0 16 16" shape-rendering="crispEdges"><g shape-rendering="auto"><path d="M1.5 12A6.5 6.5 0 1 1 14.5 12" stroke="#f00" fill="none" stroke-width="1.3"/><path d="M4 12A4 4 0 1 1 12 12" stroke="#00f" fill="none" stroke-width="1.3"/></g><text x="2" y="16" font-family="Liberation Sans" font-size="9" textLength="12" lengthAdjust="spacingAndGlyphs" fill="#000">FIB</text></svg><svg style="position:absolute;left:895px;top:76px;overflow:visible" width="16" height="16" viewBox="0 0 16 16" shape-rendering="crispEdges"><text x="2" y="7.5" font-family="Liberation Sans" font-size="9" textLength="13" lengthAdjust="spacingAndGlyphs" fill="#000">FIB</text><text x="0" y="15.5" font-family="Liberation Sans" font-size="9" textLength="17" lengthAdjust="spacingAndGlyphs" fill="#000">TIME</text></svg><svg style="position:absolute;left:925px;top:76px;overflow:visible" width="16" height="16" viewBox="0 0 16 16" shape-rendering="crispEdges"><circle cx="5" cy="5" r="4" fill="#fff" stroke="#000"/><rect x="6" y="7" width="9" height="8" fill="#fff" stroke="#000"/></svg><svg style="position:absolute;left:956px;top:76px;overflow:visible" width="16" height="16" viewBox="0 0 16 16" shape-rendering="crispEdges"><circle cx="6" cy="6" r="5" fill="#fff" stroke="#000" stroke-width="1.5"/><path d="M4 6h4M6 4v4" stroke="#000"/><path d="M10 10l5 5" stroke="#000" stroke-width="2"/></svg><svg style="position:absolute;left:978px;top:76px;overflow:visible" width="16" height="16" viewBox="0 0 16 16" shape-rendering="crispEdges"><circle cx="6" cy="6" r="5" fill="none" stroke="#999" stroke-width="1.5"/><path d="M4 6h4" stroke="#999"/><path d="M10 10l5 5" stroke="#999" stroke-width="2"/></svg><svg style="position:absolute;left:1000px;top:76px;overflow:visible" width="16" height="16" viewBox="0 0 16 16" shape-rendering="crispEdges"><path d="M1 5l4-4 10 10-3 4z" fill="#900" stroke="#000"/><path d="M9 11l3 4 3-3-3-2z" fill="#ff0" stroke="#000"/></svg><svg style="position:absolute;left:1022px;top:76px;overflow:visible" width="16" height="16" viewBox="0 0 16 16" shape-rendering="crispEdges"><rect x="1" y="1" width="14" height="14" fill="#fff" stroke="#000"/><path d="M1 1l14 14M15 1L1 15M8 1v14M1 8h14" stroke="#000" stroke-dasharray="1 1"/></svg><svg style="position:absolute;left:1044px;top:76px;overflow:visible" width="16" height="16" viewBox="0 0 16 16" shape-rendering="crispEdges"><rect x="1" y="2" width="12" height="13" fill="#fff" stroke="#000"/><rect x="3" y="1" width="12" height="13" fill="#fff" stroke="#000"/><path d="M5 5l8-1M5 8l8-1M5 11l8-1" stroke="#000"/></svg><svg style="position:absolute;left:1067px;top:76px;overflow:visible" width="16" height="16" viewBox="0 0 16 16" shape-rendering="crispEdges"><path d="M3 2v7a5 5 0 0 0 10 0V2h-3v7a2 2 0 0 1-4 0V2z" fill="#e00" stroke="#000" stroke-width=".6"/><rect x="3" y="2" width="3" height="2" fill="#000"/><rect x="10" y="2" width="3" height="2" fill="#000"/></svg><div style="position:absolute;left:100px;top:75px;width:1px;height:19px;background:#808080"></div><div style="position:absolute;left:101px;top:75px;width:1px;height:19px;background:#fff"></div><div style="position:absolute;left:291px;top:75px;width:1px;height:19px;background:#808080"></div><div style="position:absolute;left:292px;top:75px;width:1px;height:19px;background:#fff"></div><div style="position:absolute;left:344px;top:75px;width:1px;height:19px;background:#808080"></div><div style="position:absolute;left:345px;top:75px;width:1px;height:19px;background:#fff"></div><div style="position:absolute;left:396px;top:75px;width:1px;height:19px;background:#808080"></div><div style="position:absolute;left:397px;top:75px;width:1px;height:19px;background:#fff"></div><div style="position:absolute;left:557px;top:75px;width:1px;height:19px;background:#808080"></div><div style="position:absolute;left:558px;top:75px;width:1px;height:19px;background:#fff"></div><div style="position:absolute;left:821px;top:75px;width:1px;height:19px;background:#808080"></div><div style="position:absolute;left:822px;top:75px;width:1px;height:19px;background:#fff"></div><div style="position:absolute;left:918px;top:75px;width:1px;height:19px;background:#808080"></div><div style="position:absolute;left:919px;top:75px;width:1px;height:19px;background:#fff"></div><div style="position:absolute;left:948px;top:75px;width:1px;height:19px;background:#808080"></div><div style="position:absolute;left:949px;top:75px;width:1px;height:19px;background:#fff"></div><div style="position:absolute;left:196px;top:72px;width:1px;height:25px;background:#808080"></div><div style="position:absolute;left:197px;top:72px;width:1px;height:25px;background:#fff"></div><div style="position:absolute;left:610px;top:72px;width:1px;height:25px;background:#808080"></div><div style="position:absolute;left:611px;top:72px;width:1px;height:25px;background:#fff"></div><div style="position:absolute;left:614px;top:75px;width:1px;height:19px;background:#808080"></div><div style="position:absolute;left:1px;top:101px;width:1px;height:20px;background:#fff"></div><div style="position:absolute;left:1px;top:101px;width:3px;height:1px;background:#fff"></div><div style="position:absolute;left:3px;top:101px;width:1px;height:20px;background:#808080"></div><div style="position:absolute;left:1px;top:120px;width:3px;height:1px;background:#808080"></div><div style="position:absolute;left:9px;top:100px;width:22px;height:22px;background:#ede9e6"></div><div style="position:absolute;left:9px;top:100px;width:22px;height:1px;background:#808080"></div><div style="position:absolute;left:9px;top:100px;width:1px;height:22px;background:#808080"></div><div style="position:absolute;left:9px;top:121px;width:22px;height:1px;background:#fff"></div><div style="position:absolute;left:30px;top:100px;width:1px;height:22px;background:#fff"></div><svg style="position:absolute;left:12px;top:104px;overflow:visible" width="16" height="16" viewBox="0 0 16 16" shape-rendering="crispEdges"><rect x="0.5" y="0.5" width="15" height="5" fill="#0f0" stroke="#000"/><g shape-rendering="auto"><ellipse cx="4.5" cy="10.5" rx="3.6" ry="2.6" fill="none" stroke="#000" stroke-width="2.6"/><ellipse cx="11.5" cy="10.5" rx="3.6" ry="2.6" fill="none" stroke="#000" stroke-width="2.6"/><ellipse cx="4.5" cy="10.5" rx="3.6" ry="2.6" fill="none" stroke="#ff0" stroke-width="1.2"/><ellipse cx="11.5" cy="10.5" rx="3.6" ry="2.6" fill="none" stroke="#ff0" stroke-width="1.2"/><path d="M5 10.5h6" stroke="#000" stroke-width="2.4"/><path d="M5 10.5h6" stroke="#ff0" stroke-width="1"/></g></svg><svg style="position:absolute;left:33px;top:103px;overflow:visible" width="16" height="16" viewBox="0 0 16 16" shape-rendering="crispEdges"><rect x="2.5" y="2.5" width="10" height="12" fill="none" stroke="#000"/><path d="M5 6h5l-2-2M10 10H5l2 2" stroke="#000" fill="none"/></svg><svg style="position:absolute;left:55px;top:103px;overflow:visible" width="16" height="16" viewBox="0 0 16 16" shape-rendering="crispEdges"><rect x="1" y="1" width="10" height="11" fill="none" stroke="#000"/><rect x="4" y="4" width="10" height="11" fill="#d4d0c8" stroke="#000" stroke-width="1.5"/><path d="M6 8h5l-2-2M11 11H6l2 2" stroke="#000" fill="none"/></svg><svg style="position:absolute;left:77px;top:103px;overflow:visible" width="16" height="16" viewBox="0 0 16 16" shape-rendering="crispEdges"><rect x="1" y="7" width="11" height="8" fill="#fff" stroke="#000"/><path d="M3 10h7M3 12h7" stroke="#000"/><path d="M3 7l4-4 5 3" stroke="#000" fill="none"/><rect x="13" y="1" width="2" height="4" fill="#00c"/></svg><svg style="position:absolute;left:99px;top:103px;overflow:visible" width="16" height="16" viewBox="0 0 16 16" shape-rendering="crispEdges"><path d="M8 3v11M3 8.5h11" stroke="#000" stroke-width="3"/></svg><svg style="position:absolute;left:124px;top:103px;overflow:visible" width="16" height="16" viewBox="0 0 16 16" shape-rendering="crispEdges"><path d="M1 4h5l1 1h7v10H1z" fill="#ffff99" stroke="#000" stroke-width=".8"/><path d="M1 6h14" stroke="#cc9"/></svg><div style="position:absolute;left:146px;top:104px;white-space:nowrap;color:#000;font:11px 'Liberation Sans', sans-serif;line-height:13px">Equities</div><svg style="position:absolute;left:188px;top:109px" width="7" height="4" viewBox="0 0 7 4"><path d="M0 0h7l-3.5 4z" fill="#000"/></svg><svg style="position:absolute;left:203px;top:103px;overflow:visible" width="16" height="16" viewBox="0 0 16 16" shape-rendering="crispEdges"><path d="M1 4h5l1 1h7v10H1z" fill="#ffff99" stroke="#000" stroke-width=".8"/><path d="M1 6h14" stroke="#cc9"/></svg><div style="position:absolute;left:226px;top:104px;white-space:nowrap;color:#000;font:11px 'Liberation Sans', sans-serif;line-height:13px">Other Intervals</div><svg style="position:absolute;left:305px;top:109px" width="7" height="4" viewBox="0 0 7 4"><path d="M0 0h7l-3.5 4z" fill="#000"/></svg><svg style="position:absolute;left:319px;top:103px;overflow:visible" width="16" height="16" viewBox="0 0 16 16" shape-rendering="crispEdges"><circle cx="8" cy="8" r="7" fill="none" stroke="#000"/><text x="8" y="12" text-anchor="middle" font-family="Liberation Sans" font-size="11" fill="#000">S</text></svg><svg style="position:absolute;left:369px;top:103px;overflow:visible" width="16" height="16" viewBox="0 0 16 16" shape-rendering="crispEdges"><circle cx="8" cy="8" r="7" fill="none" stroke="#000"/><path d="M6 4h4M6 12h4M8 4v8" stroke="#000"/></svg><svg style="position:absolute;left:406px;top:103px;overflow:visible" width="16" height="16" viewBox="0 0 16 16" shape-rendering="crispEdges"><circle cx="8" cy="8" r="7" fill="none" stroke="#000"/><path d="M6 4h4M6 12h4M8 4v8" stroke="#000"/></svg><svg style="position:absolute;left:442px;top:103px;overflow:visible" width="16" height="16" viewBox="0 0 16 16" shape-rendering="crispEdges"><circle cx="8" cy="8" r="7" fill="none" stroke="#000"/><path d="M6 4h4M6 12h4M8 4v8" stroke="#000"/></svg><svg style="position:absolute;left:486px;top:103px;overflow:visible" width="16" height="16" viewBox="0 0 16 16" shape-rendering="crispEdges"><circle cx="8" cy="8" r="7" fill="none" stroke="#000"/><path d="M6 4h4M6 12h4M8 4v8" stroke="#000"/></svg><svg style="position:absolute;left:539px;top:103px;overflow:visible" width="16" height="16" viewBox="0 0 16 16" shape-rendering="crispEdges"><circle cx="8" cy="8" r="7" fill="none" stroke="#000"/><path d="M6 4h4M6 12h4M8 4v8" stroke="#000"/></svg><div style="position:absolute;left:341px;top:104px;white-space:nowrap;color:#000;font:11px 'Liberation Sans', sans-serif;line-height:13px">IBM</div><div style="position:absolute;left:391px;top:104px;white-space:nowrap;color:#000;font:11px 'Liberation Sans', sans-serif;line-height:13px">1</div><div style="position:absolute;left:428px;top:104px;white-space:nowrap;color:#000;font:11px 'Liberation Sans', sans-serif;line-height:13px">5</div><div style="position:absolute;left:464px;top:104px;white-space:nowrap;color:#000;font:11px 'Liberation Sans', sans-serif;line-height:13px">60</div><div style="position:absolute;left:507px;top:104px;white-space:nowrap;color:#000;font:11px 'Liberation Sans', sans-serif;line-height:13px">Daily</div><div style="position:absolute;left:561px;top:104px;white-space:nowrap;color:#000;font:11px 'Liberation Sans', sans-serif;line-height:13px">Tick</div><div style="position:absolute;left:587px;top:98px;width:1px;height:25px;background:#808080"></div><div style="position:absolute;left:588px;top:98px;width:1px;height:25px;background:#fff"></div><div style="position:absolute;left:0px;top:97px;width:1744px;height:1px;background:#808080"></div><div style="position:absolute;left:0px;top:99px;width:1744px;height:1px;background:#fff"></div><div style="position:absolute;left:0px;top:122px;width:1744px;height:1px;background:#808080"></div><div style="position:absolute;left:0px;top:123px;width:1744px;height:1px;background:#404040"></div><div style="position:absolute;left:2px;top:124px;width:1740px;height:777px;background:#fff"></div><div style="position:absolute;left:0px;top:124px;width:1px;height:777px;background:#808080"></div><div style="position:absolute;left:1px;top:124px;width:1px;height:777px;background:#404040"></div><div style="position:absolute;left:1742px;top:124px;width:1px;height:777px;background:#d4d0c8"></div><div style="position:absolute;left:0px;top:901px;width:1744px;height:1px;background:#fff"></div><div style="position:absolute;left:0px;top:904px;white-space:nowrap;color:#000;font:11px 'Liberation Sans', sans-serif;line-height:13px;letter-spacing:-0.15px">Sun Dec 12 23:23:39 2010</div><div style="position:absolute;left:1387px;top:904px;width:76px;height:17px;background:#808080"></div><div style="position:absolute;left:1388px;top:905px;width:75px;height:16px;background:#fff"></div><div style="position:absolute;left:1388px;top:905px;width:74px;height:15px;background:#d4d0c8"></div><div style="position:absolute;left:1389px;top:905px;white-space:nowrap;color:#000;font:10.5px 'Liberation Sans', sans-serif;line-height:15px;letter-spacing:-0.5px">ESGNL:</div><div style="position:absolute;left:1427px;top:905px;width:35px;height:15px;background:#00ff00"></div><div style="position:absolute;left:1436px;top:905px;white-space:nowrap;color:#000;font:11px 'Liberation Sans', sans-serif;line-height:15px">OK</div><div style="position:absolute;left:1464px;top:904px;width:34px;height:17px;background:#808080"></div><div style="position:absolute;left:1465px;top:905px;width:33px;height:16px;background:#fff"></div><div style="position:absolute;left:1465px;top:905px;width:32px;height:15px;background:#c8c8c8"></div><div style="position:absolute;left:1499px;top:904px;width:31px;height:17px;background:#808080"></div><div style="position:absolute;left:1500px;top:905px;width:30px;height:16px;background:#fff"></div><div style="position:absolute;left:1500px;top:905px;width:29px;height:15px;background:#c8c8c8"></div><div style="position:absolute;left:1531px;top:904px;width:93px;height:17px;background:#808080"></div><div style="position:absolute;left:1532px;top:905px;width:92px;height:16px;background:#fff"></div><div style="position:absolute;left:1532px;top:905px;width:91px;height:15px;background:#c8c8c8"></div><div style="position:absolute;left:1531px;top:905px;width:93px;text-align:center;white-space:nowrap;font:11px 'Liberation Sans', sans-serif;line-height:15px;color:#000">Sym 8/8</div><div style="position:absolute;left:1626px;top:904px;width:53px;height:17px;background:#808080"></div><div style="position:absolute;left:1627px;top:905px;width:52px;height:16px;background:#fff"></div><div style="position:absolute;left:1627px;top:905px;width:51px;height:15px;background:#00ff00"></div><div style="position:absolute;left:1626px;top:905px;width:53px;text-align:center;white-space:nowrap;font:11px 'Liberation Sans', sans-serif;line-height:15px;color:#000">OK</div><div style="position:absolute;left:1681px;top:904px;width:46px;height:17px;background:#808080"></div><div style="position:absolute;left:1682px;top:905px;width:45px;height:16px;background:#fff"></div><div style="position:absolute;left:1682px;top:905px;width:44px;height:15px;background:#00ff00"></div><div style="position:absolute;left:1681px;top:905px;width:46px;text-align:center;white-space:nowrap;font:11px 'Liberation Sans', sans-serif;line-height:15px;color:#000">OK</div><svg style="position:absolute;left:1728px;top:906px" width="14" height="14" viewBox="0 0 14 14"><path d="M13 1L1 13M13 5L5 13M13 9L9 13" stroke="#808080" stroke-width="1.5"/><path d="M13 2L2 13M13 6L6 13M13 10L10 13" stroke="#fff" stroke-width=".7"/></svg><div style="position:absolute;left:0px;top:921px;width:1744px;height:1px;background:#fff"></div><div style="position:absolute;left:2px;top:925px;width:52px;height:21px;background:#d4d0c8"></div><div style="position:absolute;left:2px;top:925px;width:51px;height:1px;background:#fff"></div><div style="position:absolute;left:2px;top:925px;width:1px;height:20px;background:#fff"></div><div style="position:absolute;left:2px;top:945px;width:52px;height:1px;background:#404040"></div><div style="position:absolute;left:53px;top:925px;width:1px;height:21px;background:#404040"></div><div style="position:absolute;left:3px;top:944px;width:50px;height:1px;background:#808080"></div><div style="position:absolute;left:52px;top:926px;width:1px;height:19px;background:#808080"></div><svg style="position:absolute;left:6px;top:928px" width="16" height="15" viewBox="0 0 16 15"><path d="M1 2q3-2 6 0v5q-3-2-6 0z" fill="#f60"/><path d="M8 1q3-2 6 0v5q-3-2-6 0z" fill="#3b3"/><path d="M1 8q3-2 6 0v5q-3-2-6 0z" fill="#36f"/><path d="M8 7q3-2 6 0v5q-3-2-6 0z" fill="#fc0"/></svg><div style="position:absolute;left:22px;top:928px;white-space:nowrap;color:#000;font:bold 11px 'Liberation Sans', sans-serif;line-height:14px;letter-spacing:0.7px">Start</div><div style="position:absolute;left:59px;top:925px;width:160px;height:21px;background:#d4d0c8"></div><div style="position:absolute;left:59px;top:925px;width:159px;height:1px;background:#fff"></div><div style="position:absolute;left:59px;top:925px;width:1px;height:20px;background:#fff"></div><div style="position:absolute;left:59px;top:945px;width:160px;height:1px;background:#404040"></div><div style="position:absolute;left:218px;top:925px;width:1px;height:21px;background:#404040"></div><div style="position:absolute;left:60px;top:944px;width:158px;height:1px;background:#808080"></div><div style="position:absolute;left:217px;top:926px;width:1px;height:19px;background:#808080"></div><svg style="position:absolute;left:63px;top:928px" width="16" height="16" viewBox="0 0 16 16"><path d="M3 2h9l2 3v10H5z" fill="#39f" stroke="#036" stroke-width=".6"/><path d="M4 1v2M6 1v2M8 1v2M10 1v2" stroke="#fc0"/></svg><div style="position:absolute;left:82px;top:928px;white-space:nowrap;color:#000;font:11px 'Liberation Sans', sans-serif;line-height:14px">Untitled - Notepad</div><div style="position:absolute;left:222px;top:925px;width:160px;height:21px;background:#d4d0c8"></div><div style="position:absolute;left:222px;top:925px;width:159px;height:1px;background:#fff"></div><div style="position:absolute;left:222px;top:925px;width:1px;height:20px;background:#fff"></div><div style="position:absolute;left:222px;top:945px;width:160px;height:1px;background:#404040"></div><div style="position:absolute;left:381px;top:925px;width:1px;height:21px;background:#404040"></div><div style="position:absolute;left:223px;top:944px;width:158px;height:1px;background:#808080"></div><div style="position:absolute;left:380px;top:926px;width:1px;height:19px;background:#808080"></div><svg style="position:absolute;left:226px;top:928px" width="16" height="16" viewBox="0 0 16 16"><rect x="1" y="1" width="11" height="9" fill="#ccc" stroke="#666"/><rect x="2" y="2" width="9" height="7" fill="#39c"/><rect x="3" y="11" width="10" height="4" fill="#888"/><rect x="12" y="3" width="3" height="12" fill="#aaa" stroke="#555" stroke-width=".5"/></svg><div style="position:absolute;left:246px;top:928px;white-space:nowrap;color:#000;font:11px 'Liberation Sans', sans-serif;line-height:14px">eSignal Data Manager</div><div style="position:absolute;left:385px;top:925px;width:159px;height:21px;background:#ebe9e4"></div><div style="position:absolute;left:385px;top:925px;width:159px;height:1px;background:#000"></div><div style="position:absolute;left:385px;top:925px;width:1px;height:21px;background:#000"></div><div style="position:absolute;left:385px;top:945px;width:159px;height:1px;background:#fff"></div><div style="position:absolute;left:543px;top:925px;width:1px;height:21px;background:#fff"></div><div style="position:absolute;left:386px;top:926px;width:157px;height:1px;background:#808080"></div><div style="position:absolute;left:386px;top:926px;width:1px;height:19px;background:#808080"></div><svg style="position:absolute;left:390px;top:929px" width="16" height="16" viewBox="0 0 16 16"><rect x="0" y="0" width="16" height="12" fill="#888"/><rect x="1" y="1" width="14" height="10" fill="#000"/><path d="M2 8l3-3 3 2 3-4 3 2" stroke="#0f0" fill="none"/><path d="M2 10l3-2 3 1 3-3 3 1" stroke="#f00" fill="none"/><rect x="4" y="12" width="8" height="2" fill="#ccc"/><rect x="2" y="14" width="12" height="2" fill="#fff"/></svg><div style="position:absolute;left:410px;top:929px;white-space:nowrap;color:#000;font:bold 11px 'Liberation Sans', sans-serif;line-height:14px">eSignal - Advanced G...</div><div style="position:absolute;left:1608px;top:924px;width:134px;height:22px;background:#d4d0c8"></div><div style="position:absolute;left:1608px;top:924px;width:133px;height:1px;background:#808080"></div><div style="position:absolute;left:1608px;top:924px;width:1px;height:21px;background:#808080"></div><div style="position:absolute;left:1608px;top:945px;width:134px;height:1px;background:#fff"></div><div style="position:absolute;left:1741px;top:924px;width:1px;height:22px;background:#fff"></div><svg style="position:absolute;left:1612px;top:927px" width="16" height="16" viewBox="0 0 16 16"><path d="M8 1l6 2v5q0 5-6 7-6-2-6-7V3z" fill="#fc3" stroke="#036"/><path d="M8 5v5" stroke="#000" stroke-width="2"/><circle cx="8" cy="12" r="1" fill="#000"/></svg><svg style="position:absolute;left:1630px;top:928px" width="16" height="14" viewBox="0 0 16 14"><rect x="1" y="3" width="14" height="10" rx="2" fill="#9ab" stroke="#456"/><circle cx="8" cy="8" r="3" fill="#39f" stroke="#024"/></svg><svg style="position:absolute;left:1648px;top:927px" width="16" height="16" viewBox="0 0 16 16"><rect x="1" y="1" width="12" height="9" fill="#3a3" stroke="#333"/><rect x="5" y="10" width="4" height="2" fill="#333"/><path d="M1 13h14" stroke="#0a0" stroke-width="2"/></svg><svg style="position:absolute;left:1666px;top:927px" width="16" height="16" viewBox="0 0 16 16"><circle cx="7" cy="7" r="5" fill="#ccc" stroke="#333" stroke-width="1.5"/><path d="M10 12q4-2 4-6M9 14q6-3 6-9" stroke="#36c" fill="none"/></svg><div style="position:absolute;left:1687px;top:929px;white-space:nowrap;color:#000;font:11px 'Liberation Sans', sans-serif;line-height:14px">11:23 PM</div><div style="position:absolute;left:513px;top:190px;white-space:nowrap;font:bold 34px 'Liberation Sans', sans-serif;line-height:42px;letter-spacing:0.5px;color:#dadada;text-shadow:2px 3px 3px rgba(0,0,0,0.10)">www.trading-software-collection.com</div><div style="position:absolute;left:3px;top:125px;white-space:nowrap;color:#000;font:bold 13px 'Liberation Sans', sans-serif;line-height:15px;letter-spacing:-0.05px">($INDU - DOW-JONES INDUSTRIALS 30 STOCK ,60) Dynamic,0:00-24:00</div><svg style="position:absolute;left:0;top:0" width="1744" height="948" shape-rendering="crispEdges"><defs><pattern id="hd" x="8" y="0" width="7" height="1" patternUnits="userSpaceOnUse"><rect width="1" height="1" fill="#000"/></pattern><pattern id="vd" x="0" y="1" width="1" height="4" patternUnits="userSpaceOnUse"><rect width="1" height="1" fill="#000"/></pattern></defs><rect x="8" y="145" width="1653" height="1" fill="url(#hd)"/><rect x="8" y="190" width="1653" height="1" fill="url(#hd)"/><rect x="8" y="236" width="1653" height="1" fill="url(#hd)"/><rect x="8" y="282" width="1653" height="1" fill="url(#hd)"/><rect x="8" y="328" width="1653" height="1" fill="url(#hd)"/><rect x="8" y="374" width="1653" height="1" fill="url(#hd)"/><rect x="8" y="420" width="1653" height="1" fill="url(#hd)"/><rect x="8" y="466" width="1653" height="1" fill="url(#hd)"/><rect x="8" y="512" width="1653" height="1" fill="url(#hd)"/><rect x="8" y="557" width="1653" height="1" fill="url(#hd)"/><rect x="8" y="603" width="1653" height="1" fill="url(#hd)"/><rect x="8" y="649" width="1653" height="1" fill="url(#hd)"/><rect x="8" y="695" width="1653" height="1" fill="url(#hd)"/><rect x="8" y="741" width="1653" height="1" fill="url(#hd)"/><rect x="8" y="787" width="1653" height="1" fill="url(#hd)"/><rect x="8" y="833" width="1653" height="1" fill="url(#hd)"/><rect x="8" y="168" width="1" height="1" fill="#000"/><rect x="8" y="213" width="1" height="1" fill="#000"/><rect x="8" y="259" width="1" height="1" fill="#000"/><rect x="8" y="305" width="1" height="1" fill="#000"/><rect x="8" y="351" width="1" height="1" fill="#000"/><rect x="8" y="397" width="1" height="1" fill="#000"/><rect x="8" y="443" width="1" height="1" fill="#000"/><rect x="8" y="489" width="1" height="1" fill="#000"/><rect x="8" y="535" width="1" height="1" fill="#000"/><rect x="8" y="580" width="1" height="1" fill="#000"/><rect x="8" y="626" width="1" height="1" fill="#000"/><rect x="8" y="672" width="1" height="1" fill="#000"/><rect x="8" y="718" width="1" height="1" fill="#000"/><rect x="8" y="764" width="1" height="1" fill="#000"/><rect x="8" y="810" width="1" height="1" fill="#000"/><rect x="8" y="856" width="1" height="1" fill="#000"/><rect x="64" y="168" width="1" height="1" fill="#000"/><rect x="64" y="213" width="1" height="1" fill="#000"/><rect x="64" y="259" width="1" height="1" fill="#000"/><rect x="64" y="305" width="1" height="1" fill="#000"/><rect x="64" y="351" width="1" height="1" fill="#000"/><rect x="64" y="397" width="1" height="1" fill="#000"/><rect x="64" y="443" width="1" height="1" fill="#000"/><rect x="64" y="489" width="1" height="1" fill="#000"/><rect x="64" y="535" width="1" height="1" fill="#000"/><rect x="64" y="580" width="1" height="1" fill="#000"/><rect x="64" y="626" width="1" height="1" fill="#000"/><rect x="64" y="672" width="1" height="1" fill="#000"/><rect x="64" y="718" width="1" height="1" fill="#000"/><rect x="64" y="764" width="1" height="1" fill="#000"/><rect x="64" y="810" width="1" height="1" fill="#000"/><rect x="64" y="856" width="1" height="1" fill="#000"/><rect x="120" y="168" width="1" height="1" fill="#000"/><rect x="120" y="213" width="1" height="1" fill="#000"/><rect x="120" y="259" width="1" height="1" fill="#000"/><rect x="120" y="305" width="1" height="1" fill="#000"/><rect x="120" y="351" width="1" height="1" fill="#000"/><rect x="120" y="397" width="1" height="1" fill="#000"/><rect x="120" y="443" width="1" height="1" fill="#000"/><rect x="120" y="489" width="1" height="1" fill="#000"/><rect x="120" y="535" width="1" height="1" fill="#000"/><rect x="120" y="580" width="1" height="1" fill="#000"/><rect x="120" y="626" width="1" height="1" fill="#000"/><rect x="120" y="672" width="1" height="1" fill="#000"/><rect x="120" y="718" width="1" height="1" fill="#000"/><rect x="120" y="764" width="1" height="1" fill="#000"/><rect x="120" y="810" width="1" height="1" fill="#000"/><rect x="120" y="856" width="1" height="1" fill="#000"/><rect x="176" y="168" width="1" height="1" fill="#000"/><rect x="176" y="213" width="1" height="1" fill="#000"/><rect x="176" y="259" width="1" height="1" fill="#000"/><rect x="176" y="305" width="1" height="1" fill="#000"/><rect x="176" y="351" width="1" height="1" fill="#000"/><rect x="176" y="397" width="1" height="1" fill="#000"/><rect x="176" y="443" width="1" height="1" fill="#000"/><rect x="176" y="489" width="1" height="1" fill="#000"/><rect x="176" y="535" width="1" height="1" fill="#000"/><rect x="176" y="580" width="1" height="1" fill="#000"/><rect x="176" y="626" width="1" height="1" fill="#000"/><rect x="176" y="672" width="1" height="1" fill="#000"/><rect x="176" y="718" width="1" height="1" fill="#000"/><rect x="176" y="764" width="1" height="1" fill="#000"/><rect x="176" y="810" width="1" height="1" fill="#000"/><rect x="176" y="856" width="1" height="1" fill="#000"/><rect x="232" y="168" width="1" height="1" fill="#000"/><rect x="232" y="213" width="1" height="1" fill="#000"/><rect x="232" y="259" width="1" height="1" fill="#000"/><rect x="232" y="305" width="1" height="1" fill="#000"/><rect x="232" y="351" width="1" height="1" fill="#000"/><rect x="232" y="397" width="1" height="1" fill="#000"/><rect x="232" y="443" width="1" height="1" fill="#000"/><rect x="232" y="489" width="1" height="1" fill="#000"/><rect x="232" y="535" width="1" height="1" fill="#000"/><rect x="232" y="580" width="1" height="1" fill="#000"/><rect x="232" y="626" width="1" height="1" fill="#000"/><rect x="232" y="672" width="1" height="1" fill="#000"/><rect x="232" y="718" width="1" height="1" fill="#000"/><rect x="232" y="764" width="1" height="1" fill="#000"/><rect x="232" y="810" width="1" height="1" fill="#000"/><rect x="232" y="856" width="1" height="1" fill="#000"/><rect x="288" y="168" width="1" height="1" fill="#000"/><rect x="288" y="213" width="1" height="1" fill="#000"/><rect x="288" y="259" width="1" height="1" fill="#000"/><rect x="288" y="305" width="1" height="1" fill="#000"/><rect x="288" y="351" width="1" height="1" fill="#000"/><rect x="288" y="397" width="1" height="1" fill="#000"/><rect x="288" y="443" width="1" height="1" fill="#000"/><rect x="288" y="489" width="1" height="1" fill="#000"/><rect x="288" y="535" width="1" height="1" fill="#000"/><rect x="288" y="580" width="1" height="1" fill="#000"/><rect x="288" y="626" width="1" height="1" fill="#000"/><rect x="288" y="672" width="1" height="1" fill="#000"/><rect x="288" y="718" width="1" height="1" fill="#000"/><rect x="288" y="764" width="1" height="1" fill="#000"/><rect x="288" y="810" width="1" height="1" fill="#000"/><rect x="288" y="856" width="1" height="1" fill="#000"/><rect x="344" y="168" width="1" height="1" fill="#000"/><rect x="344" y="213" width="1" height="1" fill="#000"/><rect x="344" y="259" width="1" height="1" fill="#000"/><rect x="344" y="305" width="1" height="1" fill="#000"/><rect x="344" y="351" width="1" height="1" fill="#000"/><rect x="344" y="397" width="1" height="1" fill="#000"/><rect x="344" y="443" width="1" height="1" fill="#000"/><rect x="344" y="489" width="1" height="1" fill="#000"/><rect x="344" y="535" width="1" height="1" fill="#000"/><rect x="344" y="580" width="1" height="1" fill="#000"/><rect x="344" y="626" width="1" height="1" fill="#000"/><rect x="344" y="672" width="1" height="1" fill="#000"/><rect x="344" y="718" width="1" height="1" fill="#000"/><rect x="344" y="764" width="1" height="1" fill="#000"/><rect x="344" y="810" width="1" height="1" fill="#000"/><rect x="344" y="856" width="1" height="1" fill="#000"/><rect x="393" y="168" width="1" height="1" fill="#000"/><rect x="393" y="213" width="1" height="1" fill="#000"/><rect x="393" y="259" width="1" height="1" fill="#000"/><rect x="393" y="305" width="1" height="1" fill="#000"/><rect x="393" y="351" width="1" height="1" fill="#000"/><rect x="393" y="397" width="1" height="1" fill="#000"/><rect x="393" y="443" width="1" height="1" fill="#000"/><rect x="393" y="489" width="1" height="1" fill="#000"/><rect x="393" y="535" width="1" height="1" fill="#000"/><rect x="393" y="580" width="1" height="1" fill="#000"/><rect x="393" y="626" width="1" height="1" fill="#000"/><rect x="393" y="672" width="1" height="1" fill="#000"/><rect x="393" y="718" width="1" height="1" fill="#000"/><rect x="393" y="764" width="1" height="1" fill="#000"/><rect x="393" y="810" width="1" height="1" fill="#000"/><rect x="393" y="856" width="1" height="1" fill="#000"/><rect x="449" y="168" width="1" height="1" fill="#000"/><rect x="449" y="213" width="1" height="1" fill="#000"/><rect x="449" y="259" width="1" height="1" fill="#000"/><rect x="449" y="305" width="1" height="1" fill="#000"/><rect x="449" y="351" width="1" height="1" fill="#000"/><rect x="449" y="397" width="1" height="1" fill="#000"/><rect x="449" y="443" width="1" height="1" fill="#000"/><rect x="449" y="489" width="1" height="1" fill="#000"/><rect x="449" y="535" width="1" height="1" fill="#000"/><rect x="449" y="580" width="1" height="1" fill="#000"/><rect x="449" y="626" width="1" height="1" fill="#000"/><rect x="449" y="672" width="1" height="1" fill="#000"/><rect x="449" y="718" width="1" height="1" fill="#000"/><rect x="449" y="764" width="1" height="1" fill="#000"/><rect x="449" y="810" width="1" height="1" fill="#000"/><rect x="449" y="856" width="1" height="1" fill="#000"/><rect x="505" y="168" width="1" height="1" fill="#000"/><rect x="505" y="213" width="1" height="1" fill="#000"/><rect x="505" y="259" width="1" height="1" fill="#000"/><rect x="505" y="305" width="1" height="1" fill="#000"/><rect x="505" y="351" width="1" height="1" fill="#000"/><rect x="505" y="397" width="1" height="1" fill="#000"/><rect x="505" y="443" width="1" height="1" fill="#000"/><rect x="505" y="489" width="1" height="1" fill="#000"/><rect x="505" y="535" width="1" height="1" fill="#000"/><rect x="505" y="580" width="1" height="1" fill="#000"/><rect x="505" y="626" width="1" height="1" fill="#000"/><rect x="505" y="672" width="1" height="1" fill="#000"/><rect x="505" y="718" width="1" height="1" fill="#000"/><rect x="505" y="764" width="1" height="1" fill="#000"/><rect x="505" y="810" width="1" height="1" fill="#000"/><rect x="505" y="856" width="1" height="1" fill="#000"/><rect x="561" y="168" width="1" height="1" fill="#000"/><rect x="561" y="213" width="1" height="1" fill="#000"/><rect x="561" y="259" width="1" height="1" fill="#000"/><rect x="561" y="305" width="1" height="1" fill="#000"/><rect x="561" y="351" width="1" height="1" fill="#000"/><rect x="561" y="397" width="1" height="1" fill="#000"/><rect x="561" y="443" width="1" height="1" fill="#000"/><rect x="561" y="489" width="1" height="1" fill="#000"/><rect x="561" y="535" width="1" height="1" fill="#000"/><rect x="561" y="580" width="1" height="1" fill="#000"/><rect x="561" y="626" width="1" height="1" fill="#000"/><rect x="561" y="672" width="1" height="1" fill="#000"/><rect x="561" y="718" width="1" height="1" fill="#000"/><rect x="561" y="764" width="1" height="1" fill="#000"/><rect x="561" y="810" width="1" height="1" fill="#000"/><rect x="561" y="856" width="1" height="1" fill="#000"/><rect x="624" y="168" width="1" height="1" fill="#000"/><rect x="624" y="213" width="1" height="1" fill="#000"/><rect x="624" y="259" width="1" height="1" fill="#000"/><rect x="624" y="305" width="1" height="1" fill="#000"/><rect x="624" y="351" width="1" height="1" fill="#000"/><rect x="624" y="397" width="1" height="1" fill="#000"/><rect x="624" y="443" width="1" height="1" fill="#000"/><rect x="624" y="489" width="1" height="1" fill="#000"/><rect x="624" y="535" width="1" height="1" fill="#000"/><rect x="624" y="580" width="1" height="1" fill="#000"/><rect x="624" y="626" width="1" height="1" fill="#000"/><rect x="624" y="672" width="1" height="1" fill="#000"/><rect x="624" y="718" width="1" height="1" fill="#000"/><rect x="624" y="764" width="1" height="1" fill="#000"/><rect x="624" y="810" width="1" height="1" fill="#000"/><rect x="624" y="856" width="1" height="1" fill="#000"/><rect x="673" y="168" width="1" height="1" fill="#000"/><rect x="673" y="213" width="1" height="1" fill="#000"/><rect x="673" y="259" width="1" height="1" fill="#000"/><rect x="673" y="305" width="1" height="1" fill="#000"/><rect x="673" y="351" width="1" height="1" fill="#000"/><rect x="673" y="397" width="1" height="1" fill="#000"/><rect x="673" y="443" width="1" height="1" fill="#000"/><rect x="673" y="489" width="1" height="1" fill="#000"/><rect x="673" y="535" width="1" height="1" fill="#000"/><rect x="673" y="580" width="1" height="1" fill="#000"/><rect x="673" y="626" width="1" height="1" fill="#000"/><rect x="673" y="672" width="1" height="1" fill="#000"/><rect x="673" y="718" width="1" height="1" fill="#000"/><rect x="673" y="764" width="1" height="1" fill="#000"/><rect x="673" y="810" width="1" height="1" fill="#000"/><rect x="673" y="856" width="1" height="1" fill="#000"/><rect x="729" y="168" width="1" height="1" fill="#000"/><rect x="729" y="213" width="1" height="1" fill="#000"/><rect x="729" y="259" width="1" height="1" fill="#000"/><rect x="729" y="305" width="1" height="1" fill="#000"/><rect x="729" y="351" width="1" height="1" fill="#000"/><rect x="729" y="397" width="1" height="1" fill="#000"/><rect x="729" y="443" width="1" height="1" fill="#000"/><rect x="729" y="489" width="1" height="1" fill="#000"/><rect x="729" y="535" width="1" height="1" fill="#000"/><rect x="729" y="580" width="1" height="1" fill="#000"/><rect x="729" y="626" width="1" height="1" fill="#000"/><rect x="729" y="672" width="1" height="1" fill="#000"/><rect x="729" y="718" width="1" height="1" fill="#000"/><rect x="729" y="764" width="1" height="1" fill="#000"/><rect x="729" y="810" width="1" height="1" fill="#000"/><rect x="729" y="856" width="1" height="1" fill="#000"/><rect x="785" y="168" width="1" height="1" fill="#000"/><rect x="785" y="213" width="1" height="1" fill="#000"/><rect x="785" y="259" width="1" height="1" fill="#000"/><rect x="785" y="305" width="1" height="1" fill="#000"/><rect x="785" y="351" width="1" height="1" fill="#000"/><rect x="785" y="397" width="1" height="1" fill="#000"/><rect x="785" y="443" width="1" height="1" fill="#000"/><rect x="785" y="489" width="1" height="1" fill="#000"/><rect x="785" y="535" width="1" height="1" fill="#000"/><rect x="785" y="580" width="1" height="1" fill="#000"/><rect x="785" y="626" width="1" height="1" fill="#000"/><rect x="785" y="672" width="1" height="1" fill="#000"/><rect x="785" y="718" width="1" height="1" fill="#000"/><rect x="785" y="764" width="1" height="1" fill="#000"/><rect x="785" y="810" width="1" height="1" fill="#000"/><rect x="785" y="856" width="1" height="1" fill="#000"/><rect x="841" y="168" width="1" height="1" fill="#000"/><rect x="841" y="213" width="1" height="1" fill="#000"/><rect x="841" y="259" width="1" height="1" fill="#000"/><rect x="841" y="305" width="1" height="1" fill="#000"/><rect x="841" y="351" width="1" height="1" fill="#000"/><rect x="841" y="397" width="1" height="1" fill="#000"/><rect x="841" y="443" width="1" height="1" fill="#000"/><rect x="841" y="489" width="1" height="1" fill="#000"/><rect x="841" y="535" width="1" height="1" fill="#000"/><rect x="841" y="580" width="1" height="1" fill="#000"/><rect x="841" y="626" width="1" height="1" fill="#000"/><rect x="841" y="672" width="1" height="1" fill="#000"/><rect x="841" y="718" width="1" height="1" fill="#000"/><rect x="841" y="764" width="1" height="1" fill="#000"/><rect x="841" y="810" width="1" height="1" fill="#000"/><rect x="841" y="856" width="1" height="1" fill="#000"/><rect x="904" y="168" width="1" height="1" fill="#000"/><rect x="904" y="213" width="1" height="1" fill="#000"/><rect x="904" y="259" width="1" height="1" fill="#000"/><rect x="904" y="305" width="1" height="1" fill="#000"/><rect x="904" y="351" width="1" height="1" fill="#000"/><rect x="904" y="397" width="1" height="1" fill="#000"/><rect x="904" y="443" width="1" height="1" fill="#000"/><rect x="904" y="489" width="1" height="1" fill="#000"/><rect x="904" y="535" width="1" height="1" fill="#000"/><rect x="904" y="580" width="1" height="1" fill="#000"/><rect x="904" y="626" width="1" height="1" fill="#000"/><rect x="904" y="672" width="1" height="1" fill="#000"/><rect x="904" y="718" width="1" height="1" fill="#000"/><rect x="904" y="764" width="1" height="1" fill="#000"/><rect x="904" y="810" width="1" height="1" fill="#000"/><rect x="904" y="856" width="1" height="1" fill="#000"/><rect x="953" y="168" width="1" height="1" fill="#000"/><rect x="953" y="213" width="1" height="1" fill="#000"/><rect x="953" y="259" width="1" height="1" fill="#000"/><rect x="953" y="305" width="1" height="1" fill="#000"/><rect x="953" y="351" width="1" height="1" fill="#000"/><rect x="953" y="397" width="1" height="1" fill="#000"/><rect x="953" y="443" width="1" height="1" fill="#000"/><rect x="953" y="489" width="1" height="1" fill="#000"/><rect x="953" y="535" width="1" height="1" fill="#000"/><rect x="953" y="580" width="1" height="1" fill="#000"/><rect x="953" y="626" width="1" height="1" fill="#000"/><rect x="953" y="672" width="1" height="1" fill="#000"/><rect x="953" y="718" width="1" height="1" fill="#000"/><rect x="953" y="764" width="1" height="1" fill="#000"/><rect x="953" y="810" width="1" height="1" fill="#000"/><rect x="953" y="856" width="1" height="1" fill="#000"/><rect x="1009" y="168" width="1" height="1" fill="#000"/><rect x="1009" y="213" width="1" height="1" fill="#000"/><rect x="1009" y="259" width="1" height="1" fill="#000"/><rect x="1009" y="305" width="1" height="1" fill="#000"/><rect x="1009" y="351" width="1" height="1" fill="#000"/><rect x="1009" y="397" width="1" height="1" fill="#000"/><rect x="1009" y="443" width="1" height="1" fill="#000"/><rect x="1009" y="489" width="1" height="1" fill="#000"/><rect x="1009" y="535" width="1" height="1" fill="#000"/><rect x="1009" y="580" width="1" height="1" fill="#000"/><rect x="1009" y="626" width="1" height="1" fill="#000"/><rect x="1009" y="672" width="1" height="1" fill="#000"/><rect x="1009" y="718" width="1" height="1" fill="#000"/><rect x="1009" y="764" width="1" height="1" fill="#000"/><rect x="1009" y="810" width="1" height="1" fill="#000"/><rect x="1009" y="856" width="1" height="1" fill="#000"/><rect x="1065" y="168" width="1" height="1" fill="#000"/><rect x="1065" y="213" width="1" height="1" fill="#000"/><rect x="1065" y="259" width="1" height="1" fill="#000"/><rect x="1065" y="305" width="1" height="1" fill="#000"/><rect x="1065" y="351" width="1" height="1" fill="#000"/><rect x="1065" y="397" width="1" height="1" fill="#000"/><rect x="1065" y="443" width="1" height="1" fill="#000"/><rect x="1065" y="489" width="1" height="1" fill="#000"/><rect x="1065" y="535" width="1" height="1" fill="#000"/><rect x="1065" y="580" width="1" height="1" fill="#000"/><rect x="1065" y="626" width="1" height="1" fill="#000"/><rect x="1065" y="672" width="1" height="1" fill="#000"/><rect x="1065" y="718" width="1" height="1" fill="#000"/><rect x="1065" y="764" width="1" height="1" fill="#000"/><rect x="1065" y="810" width="1" height="1" fill="#000"/><rect x="1065" y="856" width="1" height="1" fill="#000"/><rect x="1072" y="168" width="1" height="1" fill="#000"/><rect x="1072" y="213" width="1" height="1" fill="#000"/><rect x="1072" y="259" width="1" height="1" fill="#000"/><rect x="1072" y="305" width="1" height="1" fill="#000"/><rect x="1072" y="351" width="1" height="1" fill="#000"/><rect x="1072" y="397" width="1" height="1" fill="#000"/><rect x="1072" y="443" width="1" height="1" fill="#000"/><rect x="1072" y="489" width="1" height="1" fill="#000"/><rect x="1072" y="535" width="1" height="1" fill="#000"/><rect x="1072" y="580" width="1" height="1" fill="#000"/><rect x="1072" y="626" width="1" height="1" fill="#000"/><rect x="1072" y="672" width="1" height="1" fill="#000"/><rect x="1072" y="718" width="1" height="1" fill="#000"/><rect x="1072" y="764" width="1" height="1" fill="#000"/><rect x="1072" y="810" width="1" height="1" fill="#000"/><rect x="1072" y="856" width="1" height="1" fill="#000"/><rect x="1107" y="168" width="1" height="1" fill="#000"/><rect x="1107" y="213" width="1" height="1" fill="#000"/><rect x="1107" y="259" width="1" height="1" fill="#000"/><rect x="1107" y="305" width="1" height="1" fill="#000"/><rect x="1107" y="351" width="1" height="1" fill="#000"/><rect x="1107" y="397" width="1" height="1" fill="#000"/><rect x="1107" y="443" width="1" height="1" fill="#000"/><rect x="1107" y="489" width="1" height="1" fill="#000"/><rect x="1107" y="535" width="1" height="1" fill="#000"/><rect x="1107" y="580" width="1" height="1" fill="#000"/><rect x="1107" y="626" width="1" height="1" fill="#000"/><rect x="1107" y="672" width="1" height="1" fill="#000"/><rect x="1107" y="718" width="1" height="1" fill="#000"/><rect x="1107" y="764" width="1" height="1" fill="#000"/><rect x="1107" y="810" width="1" height="1" fill="#000"/><rect x="1107" y="856" width="1" height="1" fill="#000"/><rect x="1156" y="168" width="1" height="1" fill="#000"/><rect x="1156" y="213" width="1" height="1" fill="#000"/><rect x="1156" y="259" width="1" height="1" fill="#000"/><rect x="1156" y="305" width="1" height="1" fill="#000"/><rect x="1156" y="351" width="1" height="1" fill="#000"/><rect x="1156" y="397" width="1" height="1" fill="#000"/><rect x="1156" y="443" width="1" height="1" fill="#000"/><rect x="1156" y="489" width="1" height="1" fill="#000"/><rect x="1156" y="535" width="1" height="1" fill="#000"/><rect x="1156" y="580" width="1" height="1" fill="#000"/><rect x="1156" y="626" width="1" height="1" fill="#000"/><rect x="1156" y="672" width="1" height="1" fill="#000"/><rect x="1156" y="718" width="1" height="1" fill="#000"/><rect x="1156" y="764" width="1" height="1" fill="#000"/><rect x="1156" y="810" width="1" height="1" fill="#000"/><rect x="1156" y="856" width="1" height="1" fill="#000"/><rect x="1212" y="168" width="1" height="1" fill="#000"/><rect x="1212" y="213" width="1" height="1" fill="#000"/><rect x="1212" y="259" width="1" height="1" fill="#000"/><rect x="1212" y="305" width="1" height="1" fill="#000"/><rect x="1212" y="351" width="1" height="1" fill="#000"/><rect x="1212" y="397" width="1" height="1" fill="#000"/><rect x="1212" y="443" width="1" height="1" fill="#000"/><rect x="1212" y="489" width="1" height="1" fill="#000"/><rect x="1212" y="535" width="1" height="1" fill="#000"/><rect x="1212" y="580" width="1" height="1" fill="#000"/><rect x="1212" y="626" width="1" height="1" fill="#000"/><rect x="1212" y="672" width="1" height="1" fill="#000"/><rect x="1212" y="718" width="1" height="1" fill="#000"/><rect x="1212" y="764" width="1" height="1" fill="#000"/><rect x="1212" y="810" width="1" height="1" fill="#000"/><rect x="1212" y="856" width="1" height="1" fill="#000"/><rect x="1268" y="168" width="1" height="1" fill="#000"/><rect x="1268" y="213" width="1" height="1" fill="#000"/><rect x="1268" y="259" width="1" height="1" fill="#000"/><rect x="1268" y="305" width="1" height="1" fill="#000"/><rect x="1268" y="351" width="1" height="1" fill="#000"/><rect x="1268" y="397" width="1" height="1" fill="#000"/><rect x="1268" y="443" width="1" height="1" fill="#000"/><rect x="1268" y="489" width="1" height="1" fill="#000"/><rect x="1268" y="535" width="1" height="1" fill="#000"/><rect x="1268" y="580" width="1" height="1" fill="#000"/><rect x="1268" y="626" width="1" height="1" fill="#000"/><rect x="1268" y="672" width="1" height="1" fill="#000"/><rect x="1268" y="718" width="1" height="1" fill="#000"/><rect x="1268" y="764" width="1" height="1" fill="#000"/><rect x="1268" y="810" width="1" height="1" fill="#000"/><rect x="1268" y="856" width="1" height="1" fill="#000"/><rect x="1324" y="168" width="1" height="1" fill="#000"/><rect x="1324" y="213" width="1" height="1" fill="#000"/><rect x="1324" y="259" width="1" height="1" fill="#000"/><rect x="1324" y="305" width="1" height="1" fill="#000"/><rect x="1324" y="351" width="1" height="1" fill="#000"/><rect x="1324" y="397" width="1" height="1" fill="#000"/><rect x="1324" y="443" width="1" height="1" fill="#000"/><rect x="1324" y="489" width="1" height="1" fill="#000"/><rect x="1324" y="535" width="1" height="1" fill="#000"/><rect x="1324" y="580" width="1" height="1" fill="#000"/><rect x="1324" y="626" width="1" height="1" fill="#000"/><rect x="1324" y="672" width="1" height="1" fill="#000"/><rect x="1324" y="718" width="1" height="1" fill="#000"/><rect x="1324" y="764" width="1" height="1" fill="#000"/><rect x="1324" y="810" width="1" height="1" fill="#000"/><rect x="1324" y="856" width="1" height="1" fill="#000"/><rect x="1380" y="168" width="1" height="1" fill="#000"/><rect x="1380" y="213" width="1" height="1" fill="#000"/><rect x="1380" y="259" width="1" height="1" fill="#000"/><rect x="1380" y="305" width="1" height="1" fill="#000"/><rect x="1380" y="351" width="1" height="1" fill="#000"/><rect x="1380" y="397" width="1" height="1" fill="#000"/><rect x="1380" y="443" width="1" height="1" fill="#000"/><rect x="1380" y="489" width="1" height="1" fill="#000"/><rect x="1380" y="535" width="1" height="1" fill="#000"/><rect x="1380" y="580" width="1" height="1" fill="#000"/><rect x="1380" y="626" width="1" height="1" fill="#000"/><rect x="1380" y="672" width="1" height="1" fill="#000"/><rect x="1380" y="718" width="1" height="1" fill="#000"/><rect x="1380" y="764" width="1" height="1" fill="#000"/><rect x="1380" y="810" width="1" height="1" fill="#000"/><rect x="1380" y="856" width="1" height="1" fill="#000"/><rect x="1387" y="168" width="1" height="1" fill="#000"/><rect x="1387" y="213" width="1" height="1" fill="#000"/><rect x="1387" y="259" width="1" height="1" fill="#000"/><rect x="1387" y="305" width="1" height="1" fill="#000"/><rect x="1387" y="351" width="1" height="1" fill="#000"/><rect x="1387" y="397" width="1" height="1" fill="#000"/><rect x="1387" y="443" width="1" height="1" fill="#000"/><rect x="1387" y="489" width="1" height="1" fill="#000"/><rect x="1387" y="535" width="1" height="1" fill="#000"/><rect x="1387" y="580" width="1" height="1" fill="#000"/><rect x="1387" y="626" width="1" height="1" fill="#000"/><rect x="1387" y="672" width="1" height="1" fill="#000"/><rect x="1387" y="718" width="1" height="1" fill="#000"/><rect x="1387" y="764" width="1" height="1" fill="#000"/><rect x="1387" y="810" width="1" height="1" fill="#000"/><rect x="1387" y="856" width="1" height="1" fill="#000"/><rect x="1436" y="168" width="1" height="1" fill="#000"/><rect x="1436" y="213" width="1" height="1" fill="#000"/><rect x="1436" y="259" width="1" height="1" fill="#000"/><rect x="1436" y="305" width="1" height="1" fill="#000"/><rect x="1436" y="351" width="1" height="1" fill="#000"/><rect x="1436" y="397" width="1" height="1" fill="#000"/><rect x="1436" y="443" width="1" height="1" fill="#000"/><rect x="1436" y="489" width="1" height="1" fill="#000"/><rect x="1436" y="535" width="1" height="1" fill="#000"/><rect x="1436" y="580" width="1" height="1" fill="#000"/><rect x="1436" y="626" width="1" height="1" fill="#000"/><rect x="1436" y="672" width="1" height="1" fill="#000"/><rect x="1436" y="718" width="1" height="1" fill="#000"/><rect x="1436" y="764" width="1" height="1" fill="#000"/><rect x="1436" y="810" width="1" height="1" fill="#000"/><rect x="1436" y="856" width="1" height="1" fill="#000"/><rect x="1492" y="168" width="1" height="1" fill="#000"/><rect x="1492" y="213" width="1" height="1" fill="#000"/><rect x="1492" y="259" width="1" height="1" fill="#000"/><rect x="1492" y="305" width="1" height="1" fill="#000"/><rect x="1492" y="351" width="1" height="1" fill="#000"/><rect x="1492" y="397" width="1" height="1" fill="#000"/><rect x="1492" y="443" width="1" height="1" fill="#000"/><rect x="1492" y="489" width="1" height="1" fill="#000"/><rect x="1492" y="535" width="1" height="1" fill="#000"/><rect x="1492" y="580" width="1" height="1" fill="#000"/><rect x="1492" y="626" width="1" height="1" fill="#000"/><rect x="1492" y="672" width="1" height="1" fill="#000"/><rect x="1492" y="718" width="1" height="1" fill="#000"/><rect x="1492" y="764" width="1" height="1" fill="#000"/><rect x="1492" y="810" width="1" height="1" fill="#000"/><rect x="1492" y="856" width="1" height="1" fill="#000"/><rect x="1548" y="168" width="1" height="1" fill="#000"/><rect x="1548" y="213" width="1" height="1" fill="#000"/><rect x="1548" y="259" width="1" height="1" fill="#000"/><rect x="1548" y="305" width="1" height="1" fill="#000"/><rect x="1548" y="351" width="1" height="1" fill="#000"/><rect x="1548" y="397" width="1" height="1" fill="#000"/><rect x="1548" y="443" width="1" height="1" fill="#000"/><rect x="1548" y="489" width="1" height="1" fill="#000"/><rect x="1548" y="535" width="1" height="1" fill="#000"/><rect x="1548" y="580" width="1" height="1" fill="#000"/><rect x="1548" y="626" width="1" height="1" fill="#000"/><rect x="1548" y="672" width="1" height="1" fill="#000"/><rect x="1548" y="718" width="1" height="1" fill="#000"/><rect x="1548" y="764" width="1" height="1" fill="#000"/><rect x="1548" y="810" width="1" height="1" fill="#000"/><rect x="1548" y="856" width="1" height="1" fill="#000"/><rect x="1604" y="168" width="1" height="1" fill="#000"/><rect x="1604" y="213" width="1" height="1" fill="#000"/><rect x="1604" y="259" width="1" height="1" fill="#000"/><rect x="1604" y="305" width="1" height="1" fill="#000"/><rect x="1604" y="351" width="1" height="1" fill="#000"/><rect x="1604" y="397" width="1" height="1" fill="#000"/><rect x="1604" y="443" width="1" height="1" fill="#000"/><rect x="1604" y="489" width="1" height="1" fill="#000"/><rect x="1604" y="535" width="1" height="1" fill="#000"/><rect x="1604" y="580" width="1" height="1" fill="#000"/><rect x="1604" y="626" width="1" height="1" fill="#000"/><rect x="1604" y="672" width="1" height="1" fill="#000"/><rect x="1604" y="718" width="1" height="1" fill="#000"/><rect x="1604" y="764" width="1" height="1" fill="#000"/><rect x="1604" y="810" width="1" height="1" fill="#000"/><rect x="1604" y="856" width="1" height="1" fill="#000"/><rect x="1660" y="168" width="1" height="1" fill="#000"/><rect x="1660" y="213" width="1" height="1" fill="#000"/><rect x="1660" y="259" width="1" height="1" fill="#000"/><rect x="1660" y="305" width="1" height="1" fill="#000"/><rect x="1660" y="351" width="1" height="1" fill="#000"/><rect x="1660" y="397" width="1" height="1" fill="#000"/><rect x="1660" y="443" width="1" height="1" fill="#000"/><rect x="1660" y="489" width="1" height="1" fill="#000"/><rect x="1660" y="535" width="1" height="1" fill="#000"/><rect x="1660" y="580" width="1" height="1" fill="#000"/><rect x="1660" y="626" width="1" height="1" fill="#000"/><rect x="1660" y="672" width="1" height="1" fill="#000"/><rect x="1660" y="718" width="1" height="1" fill="#000"/><rect x="1660" y="764" width="1" height="1" fill="#000"/><rect x="1660" y="810" width="1" height="1" fill="#000"/><rect x="1660" y="856" width="1" height="1" fill="#000"/><rect x="64" y="125" width="1" height="743" fill="url(#vd)"/><rect x="344" y="125" width="1" height="743" fill="url(#vd)"/><rect x="624" y="125" width="1" height="743" fill="url(#vd)"/><rect x="904" y="125" width="1" height="743" fill="url(#vd)"/><rect x="1107" y="125" width="1" height="743" fill="url(#vd)"/><rect x="1387" y="125" width="1" height="743" fill="url(#vd)"/><polyline points="8.5,714.5 78.5,714.5 85.5,705.5 162.5,705.5 169.5,674.5 260.5,674.5 267.5,764.5 365.5,764.5 372.5,499.5 470.5,499.5 477.5,607.5 540.5,607.5 547.5,597.5 603.5,597.5 610.5,657.5 659.5,657.5 666.5,615.5 708.5,615.5 715.5,824.5 827.5,824.5 834.5,751.5 904.5,751.5 911.5,602.5 939.5,602.5 946.5,686.5 988.5,686.5 995.5,748.5 1072.5,748.5 1079.5,718.5 1128.5,718.5 1135.5,826.5 1261.5,826.5 1268.5,834.5 1303.5,834.5 1310.5,569.5 1387.5,569.5 1394.5,501.5 1464.5,501.5 1471.5,510.5 1534.5,510.5 1541.5,536.5 1583.5,536.5 1590.5,512.5 1660.5,512.5" fill="none" stroke="#008000" stroke-width="1"/><polyline points="8.5,413.5 78.5,413.5 85.5,347.5 162.5,347.5 169.5,385.5 260.5,385.5 267.5,158.5 365.5,158.5 372.5,335.5 470.5,335.5 477.5,302.5 540.5,302.5 547.5,349.5 603.5,349.5 610.5,363.5 659.5,363.5 666.5,378.5 708.5,378.5 715.5,298.5 827.5,298.5 834.5,346.5 904.5,346.5 911.5,443.5 939.5,443.5 946.5,408.5 988.5,408.5 995.5,391.5 1072.5,391.5 1079.5,369.5 1128.5,369.5 1135.5,360.5 1261.5,360.5 1268.5,223.5 1303.5,223.5 1310.5,346.5 1387.5,346.5 1394.5,372.5 1464.5,372.5 1471.5,326.5 1534.5,326.5 1541.5,324.5 1583.5,324.5 1590.5,362.5 1660.5,362.5" fill="none" stroke="#008000" stroke-width="1"/><polyline points="8.5,639.5 78.5,639.5 85.5,615.5 162.5,615.5 169.5,602.5 260.5,602.5 267.5,612.5 365.5,612.5 372.5,458.5 470.5,458.5 477.5,531.5 540.5,531.5 547.5,535.5 603.5,535.5 610.5,583.5 659.5,583.5 666.5,556.5 708.5,556.5 715.5,692.5 827.5,692.5 834.5,650.5 904.5,650.5 911.5,562.5 939.5,562.5 946.5,617.5 988.5,617.5 995.5,658.5 1072.5,658.5 1079.5,631.5 1128.5,631.5 1135.5,710.5 1261.5,710.5 1268.5,681.5 1303.5,681.5 1310.5,513.5 1387.5,513.5 1394.5,469.5 1464.5,469.5 1471.5,464.5 1534.5,464.5 1541.5,483.5 1583.5,483.5 1590.5,474.5 1660.5,474.5" fill="none" stroke="#0000ff" stroke-width="1"/><polyline points="8.5,488.5 78.5,488.5 85.5,436.5 162.5,436.5 169.5,458.5 260.5,458.5 267.5,310.5 365.5,310.5 372.5,377.5 470.5,377.5 477.5,379.5 540.5,379.5 547.5,411.5 603.5,411.5 610.5,437.5 659.5,437.5 666.5,437.5 708.5,437.5 715.5,430.5 827.5,430.5 834.5,447.5 904.5,447.5 911.5,483.5 939.5,483.5 946.5,478.5 988.5,478.5 995.5,480.5 1072.5,480.5 1079.5,457.5 1128.5,457.5 1135.5,477.5 1261.5,477.5 1268.5,375.5 1303.5,375.5 1310.5,402.5 1387.5,402.5 1394.5,405.5 1464.5,405.5 1471.5,372.5 1534.5,372.5 1541.5,377.5 1583.5,377.5 1590.5,399.5 1660.5,399.5" fill="none" stroke="#0000ff" stroke-width="1"/><polyline points="8.5,608.5 78.5,608.5 85.5,561.5 162.5,561.5 169.5,557.5 260.5,557.5 267.5,515.5 365.5,515.5 372.5,439.5 470.5,439.5 477.5,499.5 540.5,499.5 547.5,510.5 603.5,510.5 610.5,556.5 659.5,556.5 666.5,518.5 708.5,518.5 715.5,643.5 827.5,643.5 834.5,585.5 904.5,585.5 911.5,536.5 939.5,536.5 946.5,586.5 988.5,586.5 995.5,621.5 1072.5,621.5 1079.5,574.5 1128.5,574.5 1135.5,667.5 1261.5,667.5 1268.5,580.5 1303.5,580.5 1310.5,479.5 1387.5,479.5 1394.5,448.5 1464.5,448.5 1471.5,440.5 1534.5,440.5 1541.5,460.5 1583.5,460.5 1590.5,460.5 1660.5,460.5" fill="none" stroke="#ff0000" stroke-width="1"/><polyline points="8.5,533.5 78.5,533.5 85.5,471.5 162.5,471.5 169.5,485.5 260.5,485.5 267.5,363.5 365.5,363.5 372.5,398.5 470.5,398.5 477.5,423.5 540.5,423.5 547.5,448.5 603.5,448.5 610.5,483.5 659.5,483.5 666.5,459.5 708.5,459.5 715.5,512.5 827.5,512.5 834.5,484.5 904.5,484.5 911.5,496.5 939.5,496.5 946.5,516.5 988.5,516.5 995.5,532.5 1072.5,532.5 1079.5,487.5 1128.5,487.5 1135.5,551.5 1261.5,551.5 1268.5,427.5 1303.5,427.5 1310.5,423.5 1387.5,423.5 1394.5,416.5 1464.5,416.5 1471.5,394.5 1534.5,394.5 1541.5,407.5 1583.5,407.5 1590.5,422.5 1660.5,422.5" fill="none" stroke="#ff0000" stroke-width="1"/><polyline points="8.5,578.5 78.5,578.5 85.5,526.5 162.5,526.5 169.5,530.5 260.5,530.5 267.5,417.5 365.5,417.5 372.5,420.5 470.5,420.5 477.5,468.5 540.5,468.5 547.5,486.5 603.5,486.5 610.5,529.5 659.5,529.5 666.5,496.5 708.5,496.5 715.5,594.5 827.5,594.5 834.5,549.5 904.5,549.5 911.5,523.5 939.5,523.5 946.5,555.5 988.5,555.5 995.5,584.5 1072.5,584.5 1079.5,545.5 1128.5,545.5 1135.5,625.5 1261.5,625.5 1268.5,527.5 1303.5,527.5 1310.5,457.5 1387.5,457.5 1394.5,437.5 1464.5,437.5 1471.5,418.5 1534.5,418.5 1541.5,437.5 1583.5,437.5 1590.5,445.5 1660.5,445.5" fill="none" stroke="#00ffff" stroke-width="1"/><polyline points="8.5,563.5 78.5,563.5 85.5,506.5 162.5,506.5 169.5,512.5 260.5,512.5 267.5,461.5 365.5,461.5 372.5,418.5 470.5,418.5 477.5,455.5 540.5,455.5 547.5,473.5 603.5,473.5 610.5,510.5 659.5,510.5 666.5,481.5 708.5,481.5 715.5,561.5 827.5,561.5 834.5,521.5 904.5,521.5 911.5,511.5 939.5,511.5 946.5,547.5 988.5,547.5 995.5,570.5 1072.5,570.5 1079.5,518.5 1128.5,518.5 1135.5,593.5 1261.5,593.5 1268.5,478.5 1303.5,478.5 1310.5,443.5 1387.5,443.5 1394.5,428.5 1464.5,428.5 1471.5,415.5 1534.5,415.5 1541.5,430.5 1583.5,430.5 1590.5,437.5 1660.5,437.5" fill="none" stroke="#00ffff" stroke-width="1"/><rect x="715" y="595" width="113" height="1" fill="#00ffff"/><rect x="911" y="512" width="29" height="1" fill="#00ffff"/><rect x="1079" y="519" width="50" height="1" fill="#00ffff"/><line x1="911.5" y1="522.5" x2="939.5" y2="522.5" stroke="#00ff00" stroke-width="1"/><rect x="1646" y="125" width="1" height="743" fill="#ff0000"/><rect x="2" y="847" width="1669" height="1" fill="#ff0000"/><rect x="8" y="547" width="1" height="19" fill="#000"/><rect x="6" y="547" width="5" height="17" fill="#000"/><rect x="7" y="548" width="3" height="15" fill="#ff0000"/><rect x="15" y="543" width="1" height="24" fill="#000"/><rect x="13" y="552" width="5" height="12" fill="#000"/><rect x="14" y="553" width="3" height="10" fill="#00ff00"/><rect x="22" y="548" width="1" height="20" fill="#000"/><rect x="20" y="552" width="5" height="8" fill="#000"/><rect x="21" y="553" width="3" height="6" fill="#ff0000"/><rect x="27" y="549" width="5" height="11" fill="#000"/><rect x="28" y="550" width="3" height="9" fill="#00ff00"/><rect x="36" y="546" width="1" height="12" fill="#000"/><rect x="34" y="547" width="5" height="2" fill="#000"/><rect x="41" y="547" width="5" height="13" fill="#000"/><rect x="42" y="548" width="3" height="11" fill="#ff0000"/><rect x="50" y="543" width="1" height="17" fill="#000"/><rect x="48" y="548" width="5" height="12" fill="#000"/><rect x="49" y="549" width="3" height="10" fill="#00ff00"/><rect x="55" y="547" width="5" height="1" fill="#000"/><rect x="64" y="505" width="1" height="43" fill="#000"/><rect x="62" y="512" width="5" height="36" fill="#000"/><rect x="63" y="513" width="3" height="34" fill="#00ff00"/><rect x="71" y="491" width="1" height="20" fill="#000"/><rect x="69" y="506" width="5" height="5" fill="#000"/><rect x="70" y="507" width="3" height="3" fill="#00ff00"/><rect x="78" y="506" width="1" height="31" fill="#000"/><rect x="76" y="506" width="5" height="19" fill="#000"/><rect x="77" y="507" width="3" height="17" fill="#ff0000"/><rect x="85" y="520" width="1" height="13" fill="#000"/><rect x="83" y="524" width="5" height="5" fill="#000"/><rect x="84" y="525" width="3" height="3" fill="#ff0000"/><rect x="92" y="520" width="1" height="14" fill="#000"/><rect x="90" y="527" width="5" height="2" fill="#000"/><rect x="99" y="527" width="1" height="28" fill="#000"/><rect x="97" y="527" width="5" height="23" fill="#000"/><rect x="98" y="528" width="3" height="21" fill="#ff0000"/><rect x="106" y="547" width="1" height="28" fill="#000"/><rect x="104" y="547" width="5" height="3" fill="#000"/><rect x="105" y="548" width="3" height="1" fill="#00ff00"/><rect x="111" y="546" width="5" height="1" fill="#000"/><rect x="120" y="502" width="1" height="44" fill="#000"/><rect x="118" y="508" width="5" height="38" fill="#000"/><rect x="119" y="509" width="3" height="36" fill="#00ff00"/><rect x="127" y="509" width="1" height="12" fill="#000"/><rect x="125" y="509" width="5" height="8" fill="#000"/><rect x="126" y="510" width="3" height="6" fill="#ff0000"/><rect x="134" y="514" width="1" height="5" fill="#000"/><rect x="132" y="517" width="5" height="2" fill="#000"/><rect x="139" y="510" width="5" height="7" fill="#000"/><rect x="140" y="511" width="3" height="5" fill="#00ff00"/><rect x="146" y="505" width="5" height="4" fill="#000"/><rect x="147" y="506" width="3" height="2" fill="#00ff00"/><rect x="155" y="505" width="1" height="10" fill="#000"/><rect x="153" y="505" width="5" height="7" fill="#000"/><rect x="154" y="506" width="3" height="5" fill="#ff0000"/><rect x="162" y="512" width="1" height="8" fill="#000"/><rect x="160" y="512" width="5" height="6" fill="#000"/><rect x="161" y="513" width="3" height="4" fill="#ff0000"/><rect x="167" y="516" width="5" height="1" fill="#000"/><rect x="176" y="504" width="1" height="14" fill="#000"/><rect x="174" y="511" width="5" height="7" fill="#000"/><rect x="175" y="512" width="3" height="5" fill="#00ff00"/><rect x="183" y="505" width="1" height="13" fill="#000"/><rect x="181" y="511" width="5" height="5" fill="#000"/><rect x="182" y="512" width="3" height="3" fill="#ff0000"/><rect x="190" y="516" width="1" height="14" fill="#000"/><rect x="188" y="516" width="5" height="8" fill="#000"/><rect x="189" y="517" width="3" height="6" fill="#ff0000"/><rect x="197" y="524" width="1" height="11" fill="#000"/><rect x="195" y="524" width="5" height="3" fill="#000"/><rect x="196" y="525" width="3" height="1" fill="#ff0000"/><rect x="204" y="520" width="1" height="11" fill="#000"/><rect x="202" y="526" width="5" height="2" fill="#000"/><rect x="211" y="499" width="1" height="60" fill="#000"/><rect x="209" y="512" width="5" height="15" fill="#000"/><rect x="210" y="513" width="3" height="13" fill="#00ff00"/><rect x="218" y="502" width="1" height="20" fill="#000"/><rect x="216" y="505" width="5" height="7" fill="#000"/><rect x="217" y="506" width="3" height="5" fill="#00ff00"/><rect x="223" y="504" width="5" height="1" fill="#000"/><rect x="230" y="439" width="5" height="65" fill="#000"/><rect x="231" y="440" width="3" height="63" fill="#00ff00"/><rect x="239" y="416" width="1" height="32" fill="#000"/><rect x="237" y="416" width="5" height="23" fill="#000"/><rect x="238" y="417" width="3" height="21" fill="#00ff00"/><rect x="246" y="407" width="1" height="15" fill="#000"/><rect x="244" y="416" width="5" height="6" fill="#000"/><rect x="245" y="417" width="3" height="4" fill="#ff0000"/><rect x="253" y="417" width="1" height="9" fill="#000"/><rect x="251" y="417" width="5" height="5" fill="#000"/><rect x="252" y="418" width="3" height="3" fill="#00ff00"/><rect x="258" y="417" width="5" height="6" fill="#000"/><rect x="259" y="418" width="3" height="4" fill="#ff0000"/><rect x="267" y="412" width="1" height="14" fill="#000"/><rect x="265" y="419" width="5" height="4" fill="#000"/><rect x="266" y="420" width="3" height="2" fill="#00ff00"/><rect x="274" y="401" width="1" height="18" fill="#000"/><rect x="272" y="405" width="5" height="14" fill="#000"/><rect x="273" y="406" width="3" height="12" fill="#00ff00"/><rect x="279" y="403" width="5" height="1" fill="#000"/><rect x="288" y="397" width="1" height="17" fill="#000"/><rect x="286" y="404" width="5" height="7" fill="#000"/><rect x="287" y="405" width="3" height="5" fill="#ff0000"/><rect x="295" y="395" width="1" height="20" fill="#000"/><rect x="293" y="401" width="5" height="8" fill="#000"/><rect x="294" y="402" width="3" height="6" fill="#00ff00"/><rect x="300" y="401" width="5" height="17" fill="#000"/><rect x="301" y="402" width="3" height="15" fill="#ff0000"/><rect x="309" y="409" width="1" height="12" fill="#000"/><rect x="307" y="412" width="5" height="6" fill="#000"/><rect x="308" y="413" width="3" height="4" fill="#00ff00"/><rect x="316" y="406" width="1" height="8" fill="#000"/><rect x="314" y="410" width="5" height="2" fill="#000"/><rect x="323" y="410" width="1" height="13" fill="#000"/><rect x="321" y="410" width="5" height="9" fill="#000"/><rect x="322" y="411" width="3" height="7" fill="#ff0000"/><rect x="330" y="397" width="1" height="23" fill="#000"/><rect x="328" y="401" width="5" height="19" fill="#000"/><rect x="329" y="402" width="3" height="17" fill="#00ff00"/><rect x="335" y="400" width="5" height="1" fill="#000"/><rect x="344" y="402" width="1" height="33" fill="#000"/><rect x="342" y="402" width="5" height="31" fill="#000"/><rect x="343" y="403" width="3" height="29" fill="#ff0000"/><rect x="351" y="422" width="1" height="15" fill="#000"/><rect x="349" y="430" width="5" height="3" fill="#000"/><rect x="350" y="431" width="3" height="1" fill="#00ff00"/><rect x="358" y="418" width="1" height="18" fill="#000"/><rect x="356" y="420" width="5" height="10" fill="#000"/><rect x="357" y="421" width="3" height="8" fill="#00ff00"/><rect x="365" y="415" width="1" height="8" fill="#000"/><rect x="363" y="419" width="5" height="2" fill="#000"/><rect x="372" y="413" width="1" height="12" fill="#000"/><rect x="370" y="419" width="5" height="2" fill="#000"/><rect x="379" y="413" width="1" height="9" fill="#000"/><rect x="377" y="420" width="5" height="2" fill="#000"/><rect x="386" y="411" width="1" height="14" fill="#000"/><rect x="384" y="418" width="5" height="4" fill="#000"/><rect x="385" y="419" width="3" height="2" fill="#00ff00"/><rect x="391" y="417" width="5" height="1" fill="#000"/><rect x="400" y="414" width="1" height="16" fill="#000"/><rect x="398" y="418" width="5" height="2" fill="#000"/><rect x="407" y="410" width="1" height="14" fill="#000"/><rect x="405" y="419" width="5" height="2" fill="#000"/><rect x="412" y="420" width="5" height="15" fill="#000"/><rect x="413" y="421" width="3" height="13" fill="#ff0000"/><rect x="421" y="428" width="1" height="9" fill="#000"/><rect x="419" y="433" width="5" height="3" fill="#000"/><rect x="420" y="434" width="3" height="1" fill="#00ff00"/><rect x="428" y="425" width="1" height="23" fill="#000"/><rect x="426" y="434" width="5" height="7" fill="#000"/><rect x="427" y="435" width="3" height="5" fill="#ff0000"/><rect x="435" y="429" width="1" height="13" fill="#000"/><rect x="433" y="434" width="5" height="7" fill="#000"/><rect x="434" y="435" width="3" height="5" fill="#00ff00"/><rect x="442" y="434" width="1" height="30" fill="#000"/><rect x="440" y="434" width="5" height="9" fill="#000"/><rect x="441" y="435" width="3" height="7" fill="#ff0000"/><rect x="447" y="443" width="5" height="1" fill="#000"/><rect x="456" y="440" width="1" height="37" fill="#000"/><rect x="454" y="446" width="5" height="27" fill="#000"/><rect x="455" y="447" width="3" height="25" fill="#ff0000"/><rect x="463" y="465" width="1" height="21" fill="#000"/><rect x="461" y="468" width="5" height="5" fill="#000"/><rect x="462" y="469" width="3" height="3" fill="#00ff00"/><rect x="470" y="449" width="1" height="28" fill="#000"/><rect x="468" y="451" width="5" height="16" fill="#000"/><rect x="469" y="452" width="3" height="14" fill="#00ff00"/><rect x="477" y="451" width="1" height="11" fill="#000"/><rect x="475" y="451" width="5" height="7" fill="#000"/><rect x="476" y="452" width="3" height="5" fill="#ff0000"/><rect x="484" y="442" width="1" height="26" fill="#000"/><rect x="482" y="449" width="5" height="10" fill="#000"/><rect x="483" y="450" width="3" height="8" fill="#00ff00"/><rect x="491" y="435" width="1" height="13" fill="#000"/><rect x="489" y="443" width="5" height="5" fill="#000"/><rect x="490" y="444" width="3" height="3" fill="#00ff00"/><rect x="498" y="441" width="1" height="10" fill="#000"/><rect x="496" y="441" width="5" height="2" fill="#000"/><rect x="503" y="440" width="5" height="1" fill="#000"/><rect x="512" y="453" width="1" height="44" fill="#000"/><rect x="510" y="453" width="5" height="31" fill="#000"/><rect x="511" y="454" width="3" height="29" fill="#ff0000"/><rect x="519" y="475" width="1" height="17" fill="#000"/><rect x="517" y="483" width="5" height="2" fill="#000"/><rect x="526" y="478" width="1" height="13" fill="#000"/><rect x="524" y="481" width="5" height="2" fill="#000"/><rect x="533" y="477" width="1" height="10" fill="#000"/><rect x="531" y="483" width="5" height="3" fill="#000"/><rect x="532" y="484" width="3" height="1" fill="#ff0000"/><rect x="540" y="475" width="1" height="15" fill="#000"/><rect x="538" y="475" width="5" height="11" fill="#000"/><rect x="539" y="476" width="3" height="9" fill="#00ff00"/><rect x="547" y="463" width="1" height="15" fill="#000"/><rect x="545" y="474" width="5" height="2" fill="#000"/><rect x="554" y="471" width="1" height="18" fill="#000"/><rect x="552" y="473" width="5" height="2" fill="#000"/><rect x="559" y="472" width="5" height="1" fill="#000"/><rect x="568" y="474" width="1" height="31" fill="#000"/><rect x="566" y="474" width="5" height="7" fill="#000"/><rect x="567" y="475" width="3" height="5" fill="#ff0000"/><rect x="575" y="478" width="1" height="39" fill="#000"/><rect x="573" y="481" width="5" height="33" fill="#000"/><rect x="574" y="482" width="3" height="31" fill="#ff0000"/><rect x="582" y="499" width="1" height="16" fill="#000"/><rect x="580" y="512" width="5" height="3" fill="#000"/><rect x="581" y="513" width="3" height="1" fill="#00ff00"/><rect x="589" y="512" width="1" height="24" fill="#000"/><rect x="587" y="512" width="5" height="22" fill="#000"/><rect x="588" y="513" width="3" height="20" fill="#ff0000"/><rect x="596" y="518" width="1" height="19" fill="#000"/><rect x="594" y="529" width="5" height="4" fill="#000"/><rect x="595" y="530" width="3" height="2" fill="#00ff00"/><rect x="603" y="513" width="1" height="21" fill="#000"/><rect x="601" y="516" width="5" height="13" fill="#000"/><rect x="602" y="517" width="3" height="11" fill="#00ff00"/><rect x="610" y="508" width="1" height="19" fill="#000"/><rect x="608" y="515" width="5" height="3" fill="#000"/><rect x="609" y="516" width="3" height="1" fill="#00ff00"/><rect x="615" y="514" width="5" height="1" fill="#000"/><rect x="624" y="492" width="1" height="26" fill="#000"/><rect x="622" y="500" width="5" height="14" fill="#000"/><rect x="623" y="501" width="3" height="12" fill="#00ff00"/><rect x="631" y="489" width="1" height="21" fill="#000"/><rect x="629" y="494" width="5" height="7" fill="#000"/><rect x="630" y="495" width="3" height="5" fill="#00ff00"/><rect x="638" y="477" width="1" height="23" fill="#000"/><rect x="636" y="480" width="5" height="14" fill="#000"/><rect x="637" y="481" width="3" height="12" fill="#00ff00"/><rect x="645" y="477" width="1" height="13" fill="#000"/><rect x="643" y="479" width="5" height="2" fill="#000"/><rect x="652" y="474" width="1" height="11" fill="#000"/><rect x="650" y="479" width="5" height="2" fill="#000"/><rect x="659" y="478" width="1" height="20" fill="#000"/><rect x="657" y="481" width="5" height="7" fill="#000"/><rect x="658" y="482" width="3" height="5" fill="#ff0000"/><rect x="666" y="485" width="1" height="26" fill="#000"/><rect x="664" y="488" width="5" height="23" fill="#000"/><rect x="665" y="489" width="3" height="21" fill="#ff0000"/><rect x="671" y="510" width="5" height="1" fill="#000"/><rect x="680" y="514" width="1" height="47" fill="#000"/><rect x="678" y="514" width="5" height="40" fill="#000"/><rect x="679" y="515" width="3" height="38" fill="#ff0000"/><rect x="687" y="543" width="1" height="33" fill="#000"/><rect x="685" y="554" width="5" height="15" fill="#000"/><rect x="686" y="555" width="3" height="13" fill="#ff0000"/><rect x="694" y="569" width="1" height="40" fill="#000"/><rect x="692" y="569" width="5" height="32" fill="#000"/><rect x="693" y="570" width="3" height="30" fill="#ff0000"/><rect x="701" y="592" width="1" height="18" fill="#000"/><rect x="699" y="594" width="5" height="7" fill="#000"/><rect x="700" y="595" width="3" height="5" fill="#00ff00"/><rect x="708" y="582" width="1" height="23" fill="#000"/><rect x="706" y="586" width="5" height="9" fill="#000"/><rect x="707" y="587" width="3" height="7" fill="#00ff00"/><rect x="715" y="586" width="1" height="22" fill="#000"/><rect x="713" y="586" width="5" height="9" fill="#000"/><rect x="714" y="587" width="3" height="7" fill="#ff0000"/><rect x="722" y="586" width="1" height="27" fill="#000"/><rect x="720" y="592" width="5" height="4" fill="#000"/><rect x="721" y="593" width="3" height="2" fill="#00ff00"/><rect x="727" y="591" width="5" height="1" fill="#000"/><rect x="736" y="590" width="1" height="17" fill="#000"/><rect x="734" y="595" width="5" height="2" fill="#000"/><rect x="743" y="585" width="1" height="14" fill="#000"/><rect x="741" y="596" width="5" height="2" fill="#000"/><rect x="750" y="588" width="1" height="13" fill="#000"/><rect x="748" y="588" width="5" height="10" fill="#000"/><rect x="749" y="589" width="3" height="8" fill="#00ff00"/><rect x="757" y="585" width="1" height="9" fill="#000"/><rect x="755" y="588" width="5" height="4" fill="#000"/><rect x="756" y="589" width="3" height="2" fill="#ff0000"/><rect x="764" y="584" width="1" height="11" fill="#000"/><rect x="762" y="590" width="5" height="2" fill="#000"/><rect x="771" y="587" width="1" height="9" fill="#000"/><rect x="769" y="590" width="5" height="2" fill="#000"/><rect x="778" y="593" width="1" height="14" fill="#000"/><rect x="776" y="593" width="5" height="7" fill="#000"/><rect x="777" y="594" width="3" height="5" fill="#ff0000"/><rect x="783" y="599" width="5" height="1" fill="#000"/><rect x="792" y="534" width="1" height="64" fill="#000"/><rect x="790" y="546" width="5" height="52" fill="#000"/><rect x="791" y="547" width="3" height="50" fill="#00ff00"/><rect x="799" y="514" width="1" height="32" fill="#000"/><rect x="797" y="518" width="5" height="28" fill="#000"/><rect x="798" y="519" width="3" height="26" fill="#00ff00"/><rect x="806" y="512" width="1" height="11" fill="#000"/><rect x="804" y="518" width="5" height="3" fill="#000"/><rect x="805" y="519" width="3" height="1" fill="#ff0000"/><rect x="811" y="516" width="5" height="5" fill="#000"/><rect x="812" y="517" width="3" height="3" fill="#00ff00"/><rect x="818" y="516" width="5" height="5" fill="#000"/><rect x="819" y="517" width="3" height="3" fill="#ff0000"/><rect x="827" y="517" width="1" height="6" fill="#000"/><rect x="825" y="517" width="5" height="4" fill="#000"/><rect x="826" y="518" width="3" height="2" fill="#00ff00"/><rect x="834" y="517" width="1" height="13" fill="#000"/><rect x="832" y="517" width="5" height="5" fill="#000"/><rect x="833" y="518" width="3" height="3" fill="#ff0000"/><rect x="839" y="520" width="5" height="1" fill="#000"/><rect x="848" y="520" width="1" height="29" fill="#000"/><rect x="846" y="520" width="5" height="17" fill="#000"/><rect x="847" y="521" width="3" height="15" fill="#ff0000"/><rect x="855" y="525" width="1" height="21" fill="#000"/><rect x="853" y="530" width="5" height="8" fill="#000"/><rect x="854" y="531" width="3" height="6" fill="#00ff00"/><rect x="862" y="523" width="1" height="10" fill="#000"/><rect x="860" y="529" width="5" height="2" fill="#000"/><rect x="869" y="521" width="1" height="10" fill="#000"/><rect x="867" y="523" width="5" height="4" fill="#000"/><rect x="868" y="524" width="3" height="2" fill="#00ff00"/><rect x="876" y="519" width="1" height="7" fill="#000"/><rect x="874" y="523" width="5" height="2" fill="#000"/><rect x="883" y="512" width="1" height="11" fill="#000"/><rect x="881" y="519" width="5" height="4" fill="#000"/><rect x="882" y="520" width="3" height="2" fill="#00ff00"/><rect x="890" y="509" width="1" height="15" fill="#000"/><rect x="888" y="510" width="5" height="9" fill="#000"/><rect x="889" y="511" width="3" height="7" fill="#00ff00"/><rect x="895" y="510" width="5" height="1" fill="#000"/><rect x="904" y="511" width="1" height="35" fill="#000"/><rect x="902" y="511" width="5" height="9" fill="#000"/><rect x="903" y="512" width="3" height="7" fill="#ff0000"/><rect x="911" y="520" width="1" height="35" fill="#000"/><rect x="909" y="520" width="5" height="29" fill="#000"/><rect x="910" y="521" width="3" height="27" fill="#ff0000"/><rect x="918" y="542" width="1" height="12" fill="#000"/><rect x="916" y="547" width="5" height="2" fill="#000"/><rect x="925" y="547" width="1" height="31" fill="#000"/><rect x="923" y="547" width="5" height="20" fill="#000"/><rect x="924" y="548" width="3" height="18" fill="#ff0000"/><rect x="932" y="554" width="1" height="17" fill="#000"/><rect x="930" y="554" width="5" height="13" fill="#000"/><rect x="931" y="555" width="3" height="11" fill="#00ff00"/><rect x="937" y="532" width="5" height="23" fill="#000"/><rect x="938" y="533" width="3" height="21" fill="#00ff00"/><rect x="946" y="518" width="1" height="22" fill="#000"/><rect x="944" y="522" width="5" height="10" fill="#000"/><rect x="945" y="523" width="3" height="8" fill="#00ff00"/><rect x="951" y="521" width="5" height="1" fill="#000"/><rect x="960" y="522" width="1" height="74" fill="#000"/><rect x="958" y="522" width="5" height="68" fill="#000"/><rect x="959" y="523" width="3" height="66" fill="#ff0000"/><rect x="967" y="577" width="1" height="19" fill="#000"/><rect x="965" y="579" width="5" height="12" fill="#000"/><rect x="966" y="580" width="3" height="10" fill="#00ff00"/><rect x="974" y="580" width="1" height="27" fill="#000"/><rect x="972" y="580" width="5" height="16" fill="#000"/><rect x="973" y="581" width="3" height="14" fill="#ff0000"/><rect x="981" y="584" width="1" height="16" fill="#000"/><rect x="979" y="584" width="5" height="12" fill="#000"/><rect x="980" y="585" width="3" height="10" fill="#00ff00"/><rect x="988" y="580" width="1" height="14" fill="#000"/><rect x="986" y="584" width="5" height="8" fill="#000"/><rect x="987" y="585" width="3" height="6" fill="#ff0000"/><rect x="995" y="587" width="1" height="14" fill="#000"/><rect x="993" y="591" width="5" height="2" fill="#000"/><rect x="1002" y="581" width="1" height="15" fill="#000"/><rect x="1000" y="585" width="5" height="8" fill="#000"/><rect x="1001" y="586" width="3" height="6" fill="#00ff00"/><rect x="1007" y="586" width="5" height="1" fill="#000"/><rect x="1016" y="535" width="1" height="51" fill="#000"/><rect x="1014" y="539" width="5" height="47" fill="#000"/><rect x="1015" y="540" width="3" height="45" fill="#00ff00"/><rect x="1023" y="522" width="1" height="25" fill="#000"/><rect x="1021" y="526" width="5" height="13" fill="#000"/><rect x="1022" y="527" width="3" height="11" fill="#00ff00"/><rect x="1030" y="522" width="1" height="10" fill="#000"/><rect x="1028" y="526" width="5" height="2" fill="#000"/><rect x="1035" y="524" width="5" height="3" fill="#000"/><rect x="1036" y="525" width="3" height="1" fill="#00ff00"/><rect x="1044" y="516" width="1" height="10" fill="#000"/><rect x="1042" y="521" width="5" height="3" fill="#000"/><rect x="1043" y="522" width="3" height="1" fill="#00ff00"/><rect x="1051" y="518" width="1" height="10" fill="#000"/><rect x="1049" y="520" width="5" height="2" fill="#000"/><rect x="1058" y="512" width="1" height="15" fill="#000"/><rect x="1056" y="517" width="5" height="4" fill="#000"/><rect x="1057" y="518" width="3" height="2" fill="#00ff00"/><rect x="1063" y="516" width="5" height="1" fill="#000"/><rect x="1072" y="519" width="1" height="53" fill="#000"/><rect x="1070" y="519" width="5" height="34" fill="#000"/><rect x="1071" y="520" width="3" height="32" fill="#ff0000"/><rect x="1079" y="543" width="1" height="15" fill="#000"/><rect x="1077" y="553" width="5" height="2" fill="#000"/><rect x="1086" y="552" width="1" height="12" fill="#000"/><rect x="1084" y="554" width="5" height="2" fill="#000"/><rect x="1093" y="552" width="1" height="10" fill="#000"/><rect x="1091" y="556" width="5" height="6" fill="#000"/><rect x="1092" y="557" width="3" height="4" fill="#ff0000"/><rect x="1098" y="561" width="5" height="1" fill="#000"/><rect x="1107" y="565" width="1" height="63" fill="#000"/><rect x="1105" y="565" width="5" height="60" fill="#000"/><rect x="1106" y="566" width="3" height="58" fill="#ff0000"/><rect x="1114" y="609" width="1" height="27" fill="#000"/><rect x="1112" y="621" width="5" height="2" fill="#000"/><rect x="1121" y="612" width="1" height="19" fill="#000"/><rect x="1119" y="621" width="5" height="4" fill="#000"/><rect x="1120" y="622" width="3" height="2" fill="#ff0000"/><rect x="1126" y="611" width="5" height="14" fill="#000"/><rect x="1127" y="612" width="3" height="12" fill="#00ff00"/><rect x="1135" y="611" width="1" height="10" fill="#000"/><rect x="1133" y="611" width="5" height="3" fill="#000"/><rect x="1134" y="612" width="3" height="1" fill="#ff0000"/><rect x="1140" y="581" width="5" height="33" fill="#000"/><rect x="1141" y="582" width="3" height="31" fill="#00ff00"/><rect x="1149" y="569" width="1" height="12" fill="#000"/><rect x="1147" y="579" width="5" height="2" fill="#000"/><rect x="1154" y="578" width="5" height="1" fill="#000"/><rect x="1163" y="580" width="1" height="49" fill="#000"/><rect x="1161" y="580" width="5" height="26" fill="#000"/><rect x="1162" y="581" width="3" height="24" fill="#ff0000"/><rect x="1170" y="588" width="1" height="23" fill="#000"/><rect x="1168" y="602" width="5" height="3" fill="#000"/><rect x="1169" y="603" width="3" height="1" fill="#00ff00"/><rect x="1177" y="591" width="1" height="16" fill="#000"/><rect x="1175" y="593" width="5" height="9" fill="#000"/><rect x="1176" y="594" width="3" height="7" fill="#00ff00"/><rect x="1184" y="593" width="1" height="11" fill="#000"/><rect x="1182" y="593" width="5" height="2" fill="#000"/><rect x="1191" y="574" width="1" height="22" fill="#000"/><rect x="1189" y="581" width="5" height="12" fill="#000"/><rect x="1190" y="582" width="3" height="10" fill="#00ff00"/><rect x="1198" y="575" width="1" height="20" fill="#000"/><rect x="1196" y="581" width="5" height="4" fill="#000"/><rect x="1197" y="582" width="3" height="2" fill="#ff0000"/><rect x="1205" y="579" width="1" height="22" fill="#000"/><rect x="1203" y="585" width="5" height="14" fill="#000"/><rect x="1204" y="586" width="3" height="12" fill="#ff0000"/><rect x="1210" y="600" width="5" height="1" fill="#000"/><rect x="1217" y="506" width="5" height="94" fill="#000"/><rect x="1218" y="507" width="3" height="92" fill="#00ff00"/><rect x="1226" y="503" width="1" height="13" fill="#000"/><rect x="1224" y="506" width="5" height="5" fill="#000"/><rect x="1225" y="507" width="3" height="3" fill="#ff0000"/><rect x="1233" y="488" width="1" height="28" fill="#000"/><rect x="1231" y="491" width="5" height="20" fill="#000"/><rect x="1232" y="492" width="3" height="18" fill="#00ff00"/><rect x="1240" y="484" width="1" height="10" fill="#000"/><rect x="1238" y="488" width="5" height="3" fill="#000"/><rect x="1239" y="489" width="3" height="1" fill="#00ff00"/><rect x="1247" y="480" width="1" height="12" fill="#000"/><rect x="1245" y="485" width="5" height="3" fill="#000"/><rect x="1246" y="486" width="3" height="1" fill="#00ff00"/><rect x="1254" y="478" width="1" height="12" fill="#000"/><rect x="1252" y="478" width="5" height="7" fill="#000"/><rect x="1253" y="479" width="3" height="5" fill="#00ff00"/><rect x="1261" y="478" width="1" height="14" fill="#000"/><rect x="1259" y="478" width="5" height="9" fill="#000"/><rect x="1260" y="479" width="3" height="7" fill="#ff0000"/><rect x="1266" y="486" width="5" height="1" fill="#000"/><rect x="1273" y="461" width="5" height="25" fill="#000"/><rect x="1274" y="462" width="3" height="23" fill="#00ff00"/><rect x="1280" y="446" width="5" height="13" fill="#000"/><rect x="1281" y="447" width="3" height="11" fill="#00ff00"/><rect x="1289" y="436" width="1" height="13" fill="#000"/><rect x="1287" y="442" width="5" height="4" fill="#000"/><rect x="1288" y="443" width="3" height="2" fill="#00ff00"/><rect x="1296" y="437" width="1" height="8" fill="#000"/><rect x="1294" y="442" width="5" height="2" fill="#000"/><rect x="1303" y="439" width="1" height="8" fill="#000"/><rect x="1301" y="443" width="5" height="2" fill="#000"/><rect x="1310" y="432" width="1" height="12" fill="#000"/><rect x="1308" y="442" width="5" height="2" fill="#000"/><rect x="1317" y="433" width="1" height="11" fill="#000"/><rect x="1315" y="437" width="5" height="4" fill="#000"/><rect x="1316" y="438" width="3" height="2" fill="#00ff00"/><rect x="1322" y="436" width="5" height="1" fill="#000"/><rect x="1331" y="437" width="1" height="20" fill="#000"/><rect x="1329" y="437" width="5" height="8" fill="#000"/><rect x="1330" y="438" width="3" height="6" fill="#ff0000"/><rect x="1338" y="435" width="1" height="15" fill="#000"/><rect x="1336" y="439" width="5" height="6" fill="#000"/><rect x="1337" y="440" width="3" height="4" fill="#00ff00"/><rect x="1345" y="437" width="1" height="16" fill="#000"/><rect x="1343" y="439" width="5" height="12" fill="#000"/><rect x="1344" y="440" width="3" height="10" fill="#ff0000"/><rect x="1350" y="448" width="5" height="3" fill="#000"/><rect x="1351" y="449" width="3" height="1" fill="#00ff00"/><rect x="1359" y="442" width="1" height="6" fill="#000"/><rect x="1357" y="445" width="5" height="3" fill="#000"/><rect x="1358" y="446" width="3" height="1" fill="#00ff00"/><rect x="1366" y="441" width="1" height="9" fill="#000"/><rect x="1364" y="441" width="5" height="4" fill="#000"/><rect x="1365" y="442" width="3" height="2" fill="#00ff00"/><rect x="1373" y="425" width="1" height="20" fill="#000"/><rect x="1371" y="429" width="5" height="13" fill="#000"/><rect x="1372" y="430" width="3" height="11" fill="#00ff00"/><rect x="1378" y="428" width="5" height="1" fill="#000"/><rect x="1387" y="428" width="1" height="15" fill="#000"/><rect x="1385" y="428" width="5" height="11" fill="#000"/><rect x="1386" y="429" width="3" height="9" fill="#ff0000"/><rect x="1394" y="425" width="1" height="14" fill="#000"/><rect x="1392" y="433" width="5" height="6" fill="#000"/><rect x="1393" y="434" width="3" height="4" fill="#00ff00"/><rect x="1401" y="428" width="1" height="14" fill="#000"/><rect x="1399" y="433" width="5" height="4" fill="#000"/><rect x="1400" y="434" width="3" height="2" fill="#ff0000"/><rect x="1408" y="432" width="1" height="7" fill="#000"/><rect x="1406" y="432" width="5" height="5" fill="#000"/><rect x="1407" y="433" width="3" height="3" fill="#00ff00"/><rect x="1415" y="425" width="1" height="9" fill="#000"/><rect x="1413" y="427" width="5" height="5" fill="#000"/><rect x="1414" y="428" width="3" height="3" fill="#00ff00"/><rect x="1422" y="424" width="1" height="7" fill="#000"/><rect x="1420" y="427" width="5" height="2" fill="#000"/><rect x="1429" y="423" width="1" height="14" fill="#000"/><rect x="1427" y="427" width="5" height="10" fill="#000"/><rect x="1428" y="428" width="3" height="8" fill="#ff0000"/><rect x="1434" y="437" width="5" height="1" fill="#000"/><rect x="1443" y="396" width="1" height="40" fill="#000"/><rect x="1441" y="403" width="5" height="33" fill="#000"/><rect x="1442" y="404" width="3" height="31" fill="#00ff00"/><rect x="1450" y="399" width="1" height="14" fill="#000"/><rect x="1448" y="403" width="5" height="4" fill="#000"/><rect x="1449" y="404" width="3" height="2" fill="#ff0000"/><rect x="1455" y="407" width="5" height="8" fill="#000"/><rect x="1456" y="408" width="3" height="6" fill="#ff0000"/><rect x="1464" y="412" width="1" height="11" fill="#000"/><rect x="1462" y="412" width="5" height="3" fill="#000"/><rect x="1463" y="413" width="3" height="1" fill="#00ff00"/><rect x="1471" y="405" width="1" height="8" fill="#000"/><rect x="1469" y="409" width="5" height="4" fill="#000"/><rect x="1470" y="410" width="3" height="2" fill="#00ff00"/><rect x="1478" y="400" width="1" height="27" fill="#000"/><rect x="1476" y="409" width="5" height="18" fill="#000"/><rect x="1477" y="410" width="3" height="16" fill="#ff0000"/><rect x="1485" y="420" width="1" height="21" fill="#000"/><rect x="1483" y="426" width="5" height="13" fill="#000"/><rect x="1484" y="427" width="3" height="11" fill="#ff0000"/><rect x="1490" y="438" width="5" height="1" fill="#000"/><rect x="1499" y="425" width="1" height="16" fill="#000"/><rect x="1497" y="432" width="5" height="9" fill="#000"/><rect x="1498" y="433" width="3" height="7" fill="#00ff00"/><rect x="1506" y="432" width="1" height="21" fill="#000"/><rect x="1504" y="432" width="5" height="13" fill="#000"/><rect x="1505" y="433" width="3" height="11" fill="#ff0000"/><rect x="1513" y="435" width="1" height="13" fill="#000"/><rect x="1511" y="437" width="5" height="8" fill="#000"/><rect x="1512" y="438" width="3" height="6" fill="#00ff00"/><rect x="1520" y="435" width="1" height="13" fill="#000"/><rect x="1518" y="437" width="5" height="8" fill="#000"/><rect x="1519" y="438" width="3" height="6" fill="#ff0000"/><rect x="1527" y="432" width="1" height="13" fill="#000"/><rect x="1525" y="437" width="5" height="8" fill="#000"/><rect x="1526" y="438" width="3" height="6" fill="#00ff00"/><rect x="1534" y="430" width="1" height="12" fill="#000"/><rect x="1532" y="435" width="5" height="2" fill="#000"/><rect x="1541" y="429" width="1" height="14" fill="#000"/><rect x="1539" y="432" width="5" height="4" fill="#000"/><rect x="1540" y="433" width="3" height="2" fill="#00ff00"/><rect x="1546" y="432" width="5" height="1" fill="#000"/><rect x="1555" y="414" width="1" height="19" fill="#000"/><rect x="1553" y="425" width="5" height="8" fill="#000"/><rect x="1554" y="426" width="3" height="6" fill="#00ff00"/><rect x="1562" y="425" width="1" height="23" fill="#000"/><rect x="1560" y="425" width="5" height="19" fill="#000"/><rect x="1561" y="426" width="3" height="17" fill="#ff0000"/><rect x="1569" y="439" width="1" height="12" fill="#000"/><rect x="1567" y="444" width="5" height="2" fill="#000"/><rect x="1576" y="443" width="1" height="5" fill="#000"/><rect x="1574" y="445" width="5" height="2" fill="#000"/><rect x="1583" y="437" width="1" height="8" fill="#000"/><rect x="1581" y="441" width="5" height="4" fill="#000"/><rect x="1582" y="442" width="3" height="2" fill="#00ff00"/><rect x="1590" y="441" width="1" height="9" fill="#000"/><rect x="1588" y="441" width="5" height="2" fill="#000"/><rect x="1597" y="431" width="1" height="13" fill="#000"/><rect x="1595" y="434" width="5" height="10" fill="#000"/><rect x="1596" y="435" width="3" height="8" fill="#00ff00"/><rect x="1602" y="434" width="5" height="1" fill="#000"/><rect x="1611" y="422" width="1" height="11" fill="#000"/><rect x="1609" y="429" width="5" height="4" fill="#000"/><rect x="1610" y="430" width="3" height="2" fill="#00ff00"/><rect x="1618" y="429" width="1" height="10" fill="#000"/><rect x="1616" y="429" width="5" height="2" fill="#000"/><rect x="1625" y="427" width="1" height="8" fill="#000"/><rect x="1623" y="427" width="5" height="5" fill="#000"/><rect x="1624" y="428" width="3" height="3" fill="#00ff00"/><rect x="1632" y="420" width="1" height="10" fill="#000"/><rect x="1630" y="425" width="5" height="2" fill="#000"/><rect x="1639" y="420" width="1" height="7" fill="#000"/><rect x="1637" y="422" width="5" height="3" fill="#000"/><rect x="1638" y="423" width="3" height="1" fill="#00ff00"/><rect x="1644" y="420" width="5" height="1" fill="#000"/><rect x="1653" y="414" width="1" height="12" fill="#000"/><rect x="1651" y="418" width="5" height="3" fill="#000"/><rect x="1652" y="419" width="3" height="1" fill="#00ff00"/><rect x="1658" y="415" width="5" height="3" fill="#000"/><rect x="1659" y="416" width="3" height="1" fill="#00ff00"/><rect x="8" y="867" width="1" height="1" fill="#000"/><rect x="64" y="867" width="1" height="1" fill="#000"/><rect x="120" y="867" width="1" height="1" fill="#000"/><rect x="176" y="867" width="1" height="1" fill="#000"/><rect x="232" y="867" width="1" height="1" fill="#000"/><rect x="288" y="867" width="1" height="1" fill="#000"/><rect x="344" y="867" width="1" height="1" fill="#000"/><rect x="393" y="867" width="1" height="1" fill="#000"/><rect x="449" y="867" width="1" height="1" fill="#000"/><rect x="505" y="867" width="1" height="1" fill="#000"/><rect x="561" y="867" width="1" height="1" fill="#000"/><rect x="624" y="867" width="1" height="1" fill="#000"/><rect x="673" y="867" width="1" height="1" fill="#000"/><rect x="729" y="867" width="1" height="1" fill="#000"/><rect x="785" y="867" width="1" height="1" fill="#000"/><rect x="841" y="867" width="1" height="1" fill="#000"/><rect x="904" y="867" width="1" height="1" fill="#000"/><rect x="953" y="867" width="1" height="1" fill="#000"/><rect x="1009" y="867" width="1" height="1" fill="#000"/><rect x="1072" y="867" width="1" height="1" fill="#000"/><rect x="1107" y="867" width="1" height="1" fill="#000"/><rect x="1156" y="867" width="1" height="1" fill="#000"/><rect x="1212" y="867" width="1" height="1" fill="#000"/><rect x="1268" y="867" width="1" height="1" fill="#000"/><rect x="1324" y="867" width="1" height="1" fill="#000"/><rect x="1380" y="867" width="1" height="1" fill="#000"/><rect x="1387" y="867" width="1" height="1" fill="#000"/><rect x="1436" y="867" width="1" height="1" fill="#000"/><rect x="1492" y="867" width="1" height="1" fill="#000"/><rect x="1548" y="867" width="1" height="1" fill="#000"/><rect x="1604" y="867" width="1" height="1" fill="#000"/><rect x="1660" y="867" width="1" height="1" fill="#000"/><rect x="1671" y="125" width="1" height="744" fill="#000"/><rect x="2" y="868" width="1670" height="1" fill="#000"/></svg><div style="position:absolute;left:4px;top:142px;white-space:nowrap;color:#000;font:bold 12px 'Liberation Sans', sans-serif;line-height:12px">T</div><div style="position:absolute;left:10px;top:144px;width:113px;height:269px;background:#d4d0c8"></div><div style="position:absolute;left:10px;top:144px;width:112px;height:268px;background:#fff"></div><div style="position:absolute;left:11px;top:145px;width:112px;height:268px;background:#404040"></div><div style="position:absolute;left:11px;top:145px;width:111px;height:267px;background:#fff"></div><div style="position:absolute;left:12px;top:146px;width:110px;height:12px;background:#00ff00"></div><div style="position:absolute;left:12px;top:145px;width:110px;text-align:center;font:11px 'Liberation Sans', sans-serif;line-height:14px;color:#000">OK</div><div style="position:absolute;left:12px;top:159px;width:110px;height:14px;background:#000"></div><div style="position:absolute;left:0px;top:159px;width:53px;text-align:right;font:11px 'Liberation Sans', sans-serif;line-height:14px;color:#fff;white-space:nowrap">Symbol:</div><div style="position:absolute;left:56px;top:159px;font:11px 'Liberation Sans', sans-serif;line-height:14px;color:#fff;white-space:nowrap">$INDU,60</div><div style="position:absolute;left:12px;top:173px;width:110px;height:14px;background:#000"></div><div style="position:absolute;left:0px;top:173px;width:53px;text-align:right;font:11px 'Liberation Sans', sans-serif;line-height:14px;color:#fff;white-space:nowrap">Date:</div><div style="position:absolute;left:56px;top:173px;font:11px 'Liberation Sans', sans-serif;line-height:14px;color:#fff;white-space:nowrap">12/10/10</div><div style="position:absolute;left:12px;top:187px;width:110px;height:14px;background:#000"></div><div style="position:absolute;left:0px;top:187px;width:53px;text-align:right;font:11px 'Liberation Sans', sans-serif;line-height:14px;color:#fff;white-space:nowrap">Time:</div><div style="position:absolute;left:56px;top:187px;font:11px 'Liberation Sans', sans-serif;line-height:14px;color:#fff;white-space:nowrap">22:00</div><div style="position:absolute;left:12px;top:201px;width:110px;height:14px;background:#000"></div><div style="position:absolute;left:0px;top:201px;width:53px;text-align:right;font:11px 'Liberation Sans', sans-serif;line-height:14px;color:#fff;white-space:nowrap">Price:</div><div style="position:absolute;left:56px;top:201px;font:11px 'Liberation Sans', sans-serif;line-height:14px;color:#fff;white-space:nowrap">10467.4779</div><div style="position:absolute;left:12px;top:215px;width:110px;height:14px;background:#000"></div><div style="position:absolute;left:0px;top:215px;width:53px;text-align:right;font:11px 'Liberation Sans', sans-serif;line-height:14px;color:#fff;white-space:nowrap">Open</div><div style="position:absolute;left:56px;top:215px;font:11px 'Liberation Sans', sans-serif;line-height:14px;color:#fff;white-space:nowrap">11398.44</div><div style="position:absolute;left:12px;top:229px;width:110px;height:14px;background:#000"></div><div style="position:absolute;left:0px;top:229px;width:53px;text-align:right;font:11px 'Liberation Sans', sans-serif;line-height:14px;color:#fff;white-space:nowrap">High</div><div style="position:absolute;left:56px;top:229px;font:11px 'Liberation Sans', sans-serif;line-height:14px;color:#fff;white-space:nowrap">11401.20</div><div style="position:absolute;left:12px;top:243px;width:110px;height:14px;background:#000"></div><div style="position:absolute;left:0px;top:243px;width:53px;text-align:right;font:11px 'Liberation Sans', sans-serif;line-height:14px;color:#fff;white-space:nowrap">Low</div><div style="position:absolute;left:56px;top:243px;font:11px 'Liberation Sans', sans-serif;line-height:14px;color:#fff;white-space:nowrap">11386.71</div><div style="position:absolute;left:12px;top:257px;width:110px;height:14px;background:#000"></div><div style="position:absolute;left:0px;top:257px;width:53px;text-align:right;font:11px 'Liberation Sans', sans-serif;line-height:14px;color:#fff;white-space:nowrap">Close</div><div style="position:absolute;left:56px;top:257px;font:11px 'Liberation Sans', sans-serif;line-height:14px;color:#fff;white-space:nowrap">11396.89</div><div style="position:absolute;left:12px;top:271px;width:110px;height:14px;background:#ff0000"></div><div style="position:absolute;left:0px;top:271px;width:53px;text-align:right;font:11px 'Liberation Sans', sans-serif;line-height:14px;color:#fff;white-space:nowrap">R1</div><div style="position:absolute;left:56px;top:271px;font:11px 'Liberation Sans', sans-serif;line-height:14px;color:#fff;white-space:nowrap">11394.9467</div><div style="position:absolute;left:12px;top:285px;width:110px;height:14px;background:#0000ff"></div><div style="position:absolute;left:0px;top:285px;width:53px;text-align:right;font:11px 'Liberation Sans', sans-serif;line-height:14px;color:#fff;white-space:nowrap">R2</div><div style="position:absolute;left:56px;top:285px;font:11px 'Liberation Sans', sans-serif;line-height:14px;color:#fff;white-space:nowrap">11445.0733</div><div style="position:absolute;left:12px;top:299px;width:110px;height:14px;background:#008000"></div><div style="position:absolute;left:0px;top:299px;width:53px;text-align:right;font:11px 'Liberation Sans', sans-serif;line-height:14px;color:#fff;white-space:nowrap">R3</div><div style="position:absolute;left:56px;top:299px;font:11px 'Liberation Sans', sans-serif;line-height:14px;color:#fff;white-space:nowrap">11526.9233</div><div style="position:absolute;left:12px;top:313px;width:110px;height:14px;background:#ff0000"></div><div style="position:absolute;left:0px;top:313px;width:53px;text-align:right;font:11px 'Liberation Sans', sans-serif;line-height:14px;color:#fff;white-space:nowrap">S1</div><div style="position:absolute;left:56px;top:313px;font:11px 'Liberation Sans', sans-serif;line-height:14px;color:#fff;white-space:nowrap">11313.0967</div><div style="position:absolute;left:12px;top:327px;width:110px;height:14px;background:#0000ff"></div><div style="position:absolute;left:0px;top:327px;width:53px;text-align:right;font:11px 'Liberation Sans', sans-serif;line-height:14px;color:#fff;white-space:nowrap">S2</div><div style="position:absolute;left:56px;top:327px;font:11px 'Liberation Sans', sans-serif;line-height:14px;color:#fff;white-space:nowrap">11281.3733</div><div style="position:absolute;left:12px;top:341px;width:110px;height:14px;background:#008000"></div><div style="position:absolute;left:0px;top:341px;width:53px;text-align:right;font:11px 'Liberation Sans', sans-serif;line-height:14px;color:#fff;white-space:nowrap">S3</div><div style="position:absolute;left:56px;top:341px;font:11px 'Liberation Sans', sans-serif;line-height:14px;color:#fff;white-space:nowrap">11199.5233</div><div style="position:absolute;left:12px;top:355px;width:110px;height:14px;background:#00ff00"></div><div style="position:absolute;left:0px;top:355px;width:53px;text-align:right;font:11px 'Liberation Sans', sans-serif;line-height:14px;color:#fff;white-space:nowrap">C1</div><div style="position:absolute;left:56px;top:355px;font:11px 'Liberation Sans', sans-serif;line-height:14px;color:#fff;white-space:nowrap">11363.2233</div><div style="position:absolute;left:12px;top:369px;width:110px;height:14px;background:#00ffff"></div><div style="position:absolute;left:0px;top:369px;width:53px;text-align:right;font:11px 'Liberation Sans', sans-serif;line-height:14px;color:#fff;white-space:nowrap">C2</div><div style="position:absolute;left:56px;top:369px;font:11px 'Liberation Sans', sans-serif;line-height:14px;color:#fff;white-space:nowrap">11344.59</div><div style="position:absolute;left:12px;top:383px;width:110px;height:14px;background:#00ffff"></div><div style="position:absolute;left:0px;top:383px;width:53px;text-align:right;font:11px 'Liberation Sans', sans-serif;line-height:14px;color:#fff;white-space:nowrap">C3</div><div style="position:absolute;left:56px;top:383px;font:11px 'Liberation Sans', sans-serif;line-height:14px;color:#fff;white-space:nowrap">11344.82</div><div style="position:absolute;left:12px;top:397px;width:110px;height:14px;background:#00ffff"></div><div style="position:absolute;left:0px;top:397px;width:53px;text-align:right;font:11px 'Liberation Sans', sans-serif;line-height:14px;color:#fff;white-space:nowrap">C4</div><div style="position:absolute;left:56px;top:397px;font:11px 'Liberation Sans', sans-serif;line-height:14px;color:#fff;white-space:nowrap">11363.1467</div><div style="position:absolute;left:4px;top:855px;white-space:nowrap;color:#000;background:#fff;font:9px 'Liberation Sans', sans-serif;line-height:11px;transform:scaleX(0.88);transform-origin:0 0">&#169; eSignal, 2010</div><div style="position:absolute;left:1673px;top:137px;white-space:nowrap;color:#000;font:bold 14px 'Liberation Sans', sans-serif;line-height:16px;transform:scaleX(0.88);transform-origin:0 0">12000.00</div><div style="position:absolute;left:1673px;top:182px;white-space:nowrap;color:#000;font:bold 14px 'Liberation Sans', sans-serif;line-height:16px;transform:scaleX(0.88);transform-origin:0 0">11900.00</div><div style="position:absolute;left:1673px;top:228px;white-space:nowrap;color:#000;font:bold 14px 'Liberation Sans', sans-serif;line-height:16px;transform:scaleX(0.88);transform-origin:0 0">11800.00</div><div style="position:absolute;left:1673px;top:274px;white-space:nowrap;color:#000;font:bold 14px 'Liberation Sans', sans-serif;line-height:16px;transform:scaleX(0.88);transform-origin:0 0">11700.00</div><div style="position:absolute;left:1673px;top:320px;white-space:nowrap;color:#000;font:bold 14px 'Liberation Sans', sans-serif;line-height:16px;transform:scaleX(0.88);transform-origin:0 0">11600.00</div><div style="position:absolute;left:1673px;top:366px;white-space:nowrap;color:#000;font:bold 14px 'Liberation Sans', sans-serif;line-height:16px;transform:scaleX(0.88);transform-origin:0 0">11500.00</div><div style="position:absolute;left:1673px;top:412px;white-space:nowrap;color:#000;font:bold 14px 'Liberation Sans', sans-serif;line-height:16px;transform:scaleX(0.88);transform-origin:0 0">11400.00</div><div style="position:absolute;left:1673px;top:458px;white-space:nowrap;color:#000;font:bold 14px 'Liberation Sans', sans-serif;line-height:16px;transform:scaleX(0.88);transform-origin:0 0">11300.00</div><div style="position:absolute;left:1673px;top:504px;white-space:nowrap;color:#000;font:bold 14px 'Liberation Sans', sans-serif;line-height:16px;transform:scaleX(0.88);transform-origin:0 0">11200.00</div><div style="position:absolute;left:1673px;top:549px;white-space:nowrap;color:#000;font:bold 14px 'Liberation Sans', sans-serif;line-height:16px;transform:scaleX(0.88);transform-origin:0 0">11100.00</div><div style="position:absolute;left:1673px;top:595px;white-space:nowrap;color:#000;font:bold 14px 'Liberation Sans', sans-serif;line-height:16px;transform:scaleX(0.88);transform-origin:0 0">11000.00</div><div style="position:absolute;left:1673px;top:641px;white-space:nowrap;color:#000;font:bold 14px 'Liberation Sans', sans-serif;line-height:16px;transform:scaleX(0.88);transform-origin:0 0">10900.00</div><div style="position:absolute;left:1673px;top:687px;white-space:nowrap;color:#000;font:bold 14px 'Liberation Sans', sans-serif;line-height:16px;transform:scaleX(0.88);transform-origin:0 0">10800.00</div><div style="position:absolute;left:1673px;top:733px;white-space:nowrap;color:#000;font:bold 14px 'Liberation Sans', sans-serif;line-height:16px;transform:scaleX(0.88);transform-origin:0 0">10700.00</div><div style="position:absolute;left:1673px;top:779px;white-space:nowrap;color:#000;font:bold 14px 'Liberation Sans', sans-serif;line-height:16px;transform:scaleX(0.88);transform-origin:0 0">10600.00</div><div style="position:absolute;left:1673px;top:825px;white-space:nowrap;color:#000;font:bold 14px 'Liberation Sans', sans-serif;line-height:16px;transform:scaleX(0.88);transform-origin:0 0">10500.00</div><div style="position:absolute;left:1672px;top:355px;width:67px;height:15px;background:#008000"></div><div style="position:absolute;left:1673px;top:355px;white-space:nowrap;color:#fff;font:bold 14px 'Liberation Sans', sans-serif;line-height:15px;transform:scaleX(0.9);transform-origin:0 0">11526.9233</div><div style="position:absolute;left:1672px;top:391px;width:67px;height:15px;background:#0000ff"></div><div style="position:absolute;left:1673px;top:391px;white-space:nowrap;color:#fff;font:bold 14px 'Liberation Sans', sans-serif;line-height:15px;transform:scaleX(0.9);transform-origin:0 0">11445.0733</div><div style="position:absolute;left:1672px;top:414px;width:67px;height:15px;background:#ff0000"></div><div style="position:absolute;left:1673px;top:414px;white-space:nowrap;color:#fff;font:bold 14px 'Liberation Sans', sans-serif;line-height:15px;transform:scaleX(0.9);transform-origin:0 0">11394.9467</div><div style="position:absolute;left:1672px;top:408px;width:53px;height:15px;background:#00ff00"></div><div style="position:absolute;left:1673px;top:408px;white-space:nowrap;color:#fff;font:bold 14px 'Liberation Sans', sans-serif;line-height:15px;transform:scaleX(0.9);transform-origin:0 0">11410.32</div><div style="position:absolute;left:1672px;top:444px;width:53px;height:15px;background:#00ffff"></div><div style="position:absolute;left:1673px;top:444px;white-space:nowrap;color:#fff;font:bold 14px 'Liberation Sans', sans-serif;line-height:15px;transform:scaleX(0.9);transform-origin:0 0">11344.82</div><div style="position:absolute;left:1672px;top:430px;width:67px;height:15px;background:#00ffff"></div><div style="position:absolute;left:1673px;top:430px;white-space:nowrap;color:#fff;font:bold 14px 'Liberation Sans', sans-serif;line-height:15px;transform:scaleX(0.9);transform-origin:0 0">11363.1467</div><div style="position:absolute;left:1672px;top:453px;width:67px;height:15px;background:#ff0000"></div><div style="position:absolute;left:1673px;top:453px;white-space:nowrap;color:#fff;font:bold 14px 'Liberation Sans', sans-serif;line-height:15px;transform:scaleX(0.9);transform-origin:0 0">11313.0967</div><div style="position:absolute;left:1672px;top:466px;width:67px;height:15px;background:#0000ff"></div><div style="position:absolute;left:1673px;top:466px;white-space:nowrap;color:#fff;font:bold 14px 'Liberation Sans', sans-serif;line-height:15px;transform:scaleX(0.9);transform-origin:0 0">11281.3733</div><div style="position:absolute;left:1672px;top:504px;width:67px;height:15px;background:#008000"></div><div style="position:absolute;left:1673px;top:504px;white-space:nowrap;color:#fff;font:bold 14px 'Liberation Sans', sans-serif;line-height:15px;transform:scaleX(0.9);transform-origin:0 0">11199.5233</div><div style="position:absolute;left:8px;top:870px;white-space:nowrap;color:#000;font:bold 14px 'Liberation Sans', sans-serif;line-height:16px;letter-spacing:-0.2px;transform:scaleX(0.9);transform-origin:0 0">10/29</div><div style="position:absolute;left:64px;top:870px;white-space:nowrap;color:#000;font:bold 14px 'Liberation Sans', sans-serif;line-height:16px;letter-spacing:-0.2px;transform:scaleX(0.9);transform-origin:0 0">11/01</div><div style="position:absolute;left:120px;top:870px;white-space:nowrap;color:#000;font:bold 14px 'Liberation Sans', sans-serif;line-height:16px;letter-spacing:-0.2px;transform:scaleX(0.9);transform-origin:0 0">11/02</div><div style="position:absolute;left:176px;top:870px;white-space:nowrap;color:#000;font:bold 14px 'Liberation Sans', sans-serif;line-height:16px;letter-spacing:-0.2px;transform:scaleX(0.9);transform-origin:0 0">11/03</div><div style="position:absolute;left:232px;top:870px;white-space:nowrap;color:#000;font:bold 14px 'Liberation Sans', sans-serif;line-height:16px;letter-spacing:-0.2px;transform:scaleX(0.9);transform-origin:0 0">11/04</div><div style="position:absolute;left:288px;top:870px;white-space:nowrap;color:#000;font:bold 14px 'Liberation Sans', sans-serif;line-height:16px;letter-spacing:-0.2px;transform:scaleX(0.9);transform-origin:0 0">11/05</div><div style="position:absolute;left:344px;top:870px;white-space:nowrap;color:#000;font:bold 14px 'Liberation Sans', sans-serif;line-height:16px;letter-spacing:-0.2px;transform:scaleX(0.9);transform-origin:0 0">11/08</div><div style="position:absolute;left:393px;top:870px;white-space:nowrap;color:#000;font:bold 14px 'Liberation Sans', sans-serif;line-height:16px;letter-spacing:-0.2px;transform:scaleX(0.9);transform-origin:0 0">11/09</div><div style="position:absolute;left:449px;top:870px;white-space:nowrap;color:#000;font:bold 14px 'Liberation Sans', sans-serif;line-height:16px;letter-spacing:-0.2px;transform:scaleX(0.9);transform-origin:0 0">11/10</div><div style="position:absolute;left:505px;top:870px;white-space:nowrap;color:#000;font:bold 14px 'Liberation Sans', sans-serif;line-height:16px;letter-spacing:-0.2px;transform:scaleX(0.9);transform-origin:0 0">11/11</div><div style="position:absolute;left:561px;top:870px;white-space:nowrap;color:#000;font:bold 14px 'Liberation Sans', sans-serif;line-height:16px;letter-spacing:-0.2px;transform:scaleX(0.9);transform-origin:0 0">11/12</div><div style="position:absolute;left:624px;top:870px;white-space:nowrap;color:#000;font:bold 14px 'Liberation Sans', sans-serif;line-height:16px;letter-spacing:-0.2px;transform:scaleX(0.9);transform-origin:0 0">11/15</div><div style="position:absolute;left:673px;top:870px;white-space:nowrap;color:#000;font:bold 14px 'Liberation Sans', sans-serif;line-height:16px;letter-spacing:-0.2px;transform:scaleX(0.9);transform-origin:0 0">11/16</div><div style="position:absolute;left:729px;top:870px;white-space:nowrap;color:#000;font:bold 14px 'Liberation Sans', sans-serif;line-height:16px;letter-spacing:-0.2px;transform:scaleX(0.9);transform-origin:0 0">11/17</div><div style="position:absolute;left:785px;top:870px;white-space:nowrap;color:#000;font:bold 14px 'Liberation Sans', sans-serif;line-height:16px;letter-spacing:-0.2px;transform:scaleX(0.9);transform-origin:0 0">11/18</div><div style="position:absolute;left:841px;top:870px;white-space:nowrap;color:#000;font:bold 14px 'Liberation Sans', sans-serif;line-height:16px;letter-spacing:-0.2px;transform:scaleX(0.9);transform-origin:0 0">11/19</div><div style="position:absolute;left:904px;top:870px;white-space:nowrap;color:#000;font:bold 14px 'Liberation Sans', sans-serif;line-height:16px;letter-spacing:-0.2px;transform:scaleX(0.9);transform-origin:0 0">11/22</div><div style="position:absolute;left:953px;top:870px;white-space:nowrap;color:#000;font:bold 14px 'Liberation Sans', sans-serif;line-height:16px;letter-spacing:-0.2px;transform:scaleX(0.9);transform-origin:0 0">11/23</div><div style="position:absolute;left:1009px;top:870px;white-space:nowrap;color:#000;font:bold 14px 'Liberation Sans', sans-serif;line-height:16px;letter-spacing:-0.2px;transform:scaleX(0.9);transform-origin:0 0">11/24</div><div style="position:absolute;left:1072px;top:870px;white-space:nowrap;color:#000;font:bold 14px 'Liberation Sans', sans-serif;line-height:16px;letter-spacing:-0.2px;transform:scaleX(0.9);transform-origin:0 0">11/26</div><div style="position:absolute;left:1107px;top:870px;white-space:nowrap;color:#000;font:bold 14px 'Liberation Sans', sans-serif;line-height:16px;letter-spacing:-0.2px;transform:scaleX(0.9);transform-origin:0 0">11/29</div><div style="position:absolute;left:1156px;top:870px;white-space:nowrap;color:#000;font:bold 14px 'Liberation Sans', sans-serif;line-height:16px;letter-spacing:-0.2px;transform:scaleX(0.9);transform-origin:0 0">11/30</div><div style="position:absolute;left:1212px;top:870px;white-space:nowrap;color:#000;font:bold 14px 'Liberation Sans', sans-serif;line-height:16px;letter-spacing:-0.2px;transform:scaleX(0.9);transform-origin:0 0">12/01</div><div style="position:absolute;left:1268px;top:870px;white-space:nowrap;color:#000;font:bold 14px 'Liberation Sans', sans-serif;line-height:16px;letter-spacing:-0.2px;transform:scaleX(0.9);transform-origin:0 0">12/02</div><div style="position:absolute;left:1324px;top:870px;white-space:nowrap;color:#000;font:bold 14px 'Liberation Sans', sans-serif;line-height:16px;letter-spacing:-0.2px;transform:scaleX(0.9);transform-origin:0 0">12/03</div><div style="position:absolute;left:1387px;top:870px;white-space:nowrap;color:#000;font:bold 14px 'Liberation Sans', sans-serif;line-height:16px;letter-spacing:-0.2px;transform:scaleX(0.9);transform-origin:0 0">12/06</div><div style="position:absolute;left:1436px;top:870px;white-space:nowrap;color:#000;font:bold 14px 'Liberation Sans', sans-serif;line-height:16px;letter-spacing:-0.2px;transform:scaleX(0.9);transform-origin:0 0">12/07</div><div style="position:absolute;left:1492px;top:870px;white-space:nowrap;color:#000;font:bold 14px 'Liberation Sans', sans-serif;line-height:16px;letter-spacing:-0.2px;transform:scaleX(0.9);transform-origin:0 0">12/08</div><div style="position:absolute;left:1548px;top:870px;white-space:nowrap;color:#000;font:bold 14px 'Liberation Sans', sans-serif;line-height:16px;letter-spacing:-0.2px;transform:scaleX(0.9);transform-origin:0 0">12/09</div><div style="position:absolute;left:1604px;top:870px;white-space:nowrap;color:#000;font:bold 14px 'Liberation Sans', sans-serif;line-height:16px;letter-spacing:-0.2px;transform:scaleX(0.9);transform-origin:0 0">12/10</div><div style="position:absolute;left:1660px;top:870px;white-space:nowrap;color:#000;font:bold 14px 'Liberation Sans', sans-serif;line-height:16px;letter-spacing:-0.2px;transform:scaleX(0.9);transform-origin:0 0">12/11</div></body></html>
